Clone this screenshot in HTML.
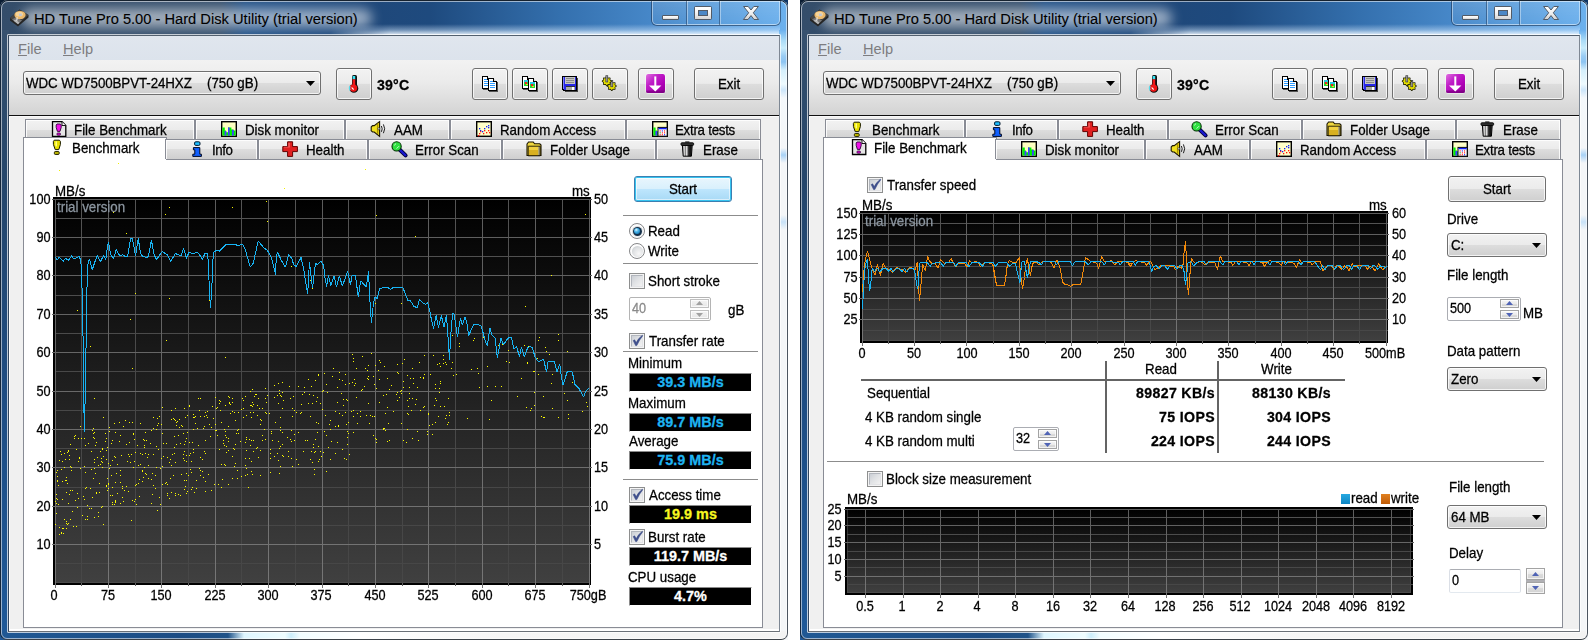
<!DOCTYPE html><html><head><meta charset="utf-8"><title>HD Tune Pro</title><style>
html,body{margin:0;padding:0;background:#fff;}
body{width:1588px;height:640px;overflow:hidden;position:relative;font-family:"Liberation Sans",sans-serif;font-size:13.33px;}
.win{position:absolute;top:0;width:788px;height:640px;overflow:hidden;}
.win *{position:absolute;box-sizing:border-box;}
.t{white-space:nowrap;-webkit-text-stroke:0.28px currentColor;}
.win .t *{position:static;}
svg{overflow:visible;}
.btn{border:1px solid #707070;border-radius:3px;background:linear-gradient(#f2f2f2 0%,#ebebeb 48%,#dddddd 50%,#cfcfcf 100%);box-shadow:inset 0 0 0 1px rgba(255,255,255,.75);}
.tab{border:1px solid #898c95;border-bottom:none;background:linear-gradient(#f2f2f2 0%,#ebebeb 48%,#dddddd 50%,#cfcfcf 100%);box-shadow:inset 1px 1px 0 0 rgba(255,255,255,.85), inset -1px 0 0 0 rgba(255,255,255,.85);}
.blk{background:#000;color:#fff;text-align:center;font-weight:bold;font-size:14.6px;}

.tab .tc{position:static;display:flex;justify-content:center;align-items:center;width:100%;height:100%;white-space:nowrap;}
.tab .tc *{position:static;}
.tab .tc svg{margin-right:7.5px;flex:none;}
.tab .tc span{line-height:16px;font-size:14.5px;display:inline-block;transform:scaleX(.919);transform-origin:0 50%;}
.tab.sel{background:#fff;box-shadow:none;}
</style></head><body><div class="win" style="left:0px;"><div style="left:0;top:0;width:9px;height:9px;background:#0b1d33;"></div><div style="left:779px;top:0;width:9px;height:9px;background:#0d3566;"></div><div style="left:0;top:631px;width:9px;height:9px;background:#0a2f5c;"></div><div style="left:779px;top:631px;width:9px;height:9px;background:#c4c4c4;"></div><div style="left:0;top:0;width:788px;height:640px;border-radius:8px 8px 7px 7px;background:#f4f6f8;"></div><div style="left:0;top:0;width:788px;height:36px;border-radius:8px 8px 0 0;background:linear-gradient(to right,#344d6a 0px,#38526f 220px,#27558a 245px,#1f487a 370px,#1e4a7e 430px,#3470ae 560px,#4687c8 650px,#5a9edd 720px,#6cb1ee 788px);"></div><div style="left:330px;top:24px;width:450px;height:11px;background:linear-gradient(to bottom,rgba(255,255,255,0) 0,rgba(215,235,255,.45) 55%,rgba(240,248,255,.95) 100%);-webkit-mask-image:linear-gradient(to right,transparent,#000 60px);mask-image:linear-gradient(to right,transparent,#000 60px);"></div><div style="left:0;top:30px;width:9px;height:610px;background:linear-gradient(to bottom,#38526f 0,#314d6c 40px,#25466b 150px,#1e4d84 380px,#1f5998 600px);"></div><div style="left:779px;top:30px;width:9px;height:610px;background:linear-gradient(to bottom,#6cb1ee 0,#a8daf6 10px,#c8ecfb 18px,#9accf4 26px,#8cc4f2 32px,#d4effc 40px,#eefafe 54px,#cde6fa 60px,#f4f8fb 68px,#f4f6f8 118px,#a8d2f6 125px,#f4f6f8 133px,#f4f6f8 185px,#c8e2f8 192px,#f4f6f8 200px,#f4f6f8 610px);"></div><div style="left:0;top:631px;width:788px;height:9px;border-radius:0 0 7px 7px;background:linear-gradient(to right,#1f5894 0,#1c4c84 180px,#1f5288 228px,#dff6ff 244px,#effdff 285px,#cdeefb 291px,#f2fdff 300px,#ffffff 360px,#f6f6f6 500px,#f3f3f3 788px);"></div><div style="left:22px;top:9px;width:350px;height:18px;border-radius:9px;background:rgba(255,255,255,.55);filter:blur(6px);"></div><div style="left:0;top:0;width:788px;height:640px;border-radius:8px 8px 7px 7px;border:1px solid;border-color:#16222f #4c5560 #3b4148 #14263b;"></div><div style="left:1px;top:1px;width:786px;height:638px;border-radius:7px 7px 6px 6px;border:1px solid rgba(255,255,255,.55);"></div><div style="left:7px;top:34px;width:774px;height:599px;border:1px solid rgba(255,255,255,.7);border-radius:1px;"></div><div style="left:8px;top:35px;width:772px;height:597px;border:1px solid;border-color:#53606e #7e8894 #6a7077 #34465c;background:#f0f0f0;"></div><div style="left:9px;top:117px;width:1px;height:514px;background:#fff;"></div><div style="left:9px;top:629px;width:770px;height:2px;background:#fff;"></div><svg style="left:9px;top:7px" width="22" height="21" viewBox="0 0 22 21"><polygon points="1,11 10.5,2.5 19.5,8 19.5,10.5 9,19.5 1,13.5" fill="#262626"/><polygon points="1,11 10.5,2.5 19.5,8 9,17" fill="#444"/><polygon points="3,12.4 9,17 13,13.4 7.4,10" fill="#8a8a8a" opacity=".75"/><polygon points="4.6,13.8 9,17.2 10.6,15.8 6.2,12.6" fill="#c8c8c8" opacity=".8"/><ellipse cx="11" cy="8" rx="5.6" ry="4.1" fill="#eab86c"/><ellipse cx="10.4" cy="7.2" rx="3.6" ry="2.4" fill="#f6d59a"/><rect x="10" y="6.6" width="2.8" height="2.4" fill="#c2c6d2"/><polygon points="7.6,10.4 8.6,10 8.4,13.6 7.2,14" fill="#f0f0f0"/></svg><div class="t" style="left:34px;top:9.91px;font-size:14.68px;line-height:18px;color:#000;-webkit-text-stroke:0.1px #000;">HD Tune Pro 5.00 - Hard Disk Utility (trial version)</div><div style="left:651px;top:0px;width:130px;height:26px;border:1px solid rgba(20,40,70,.55);border-top:none;border-radius:0 0 6px 6px;"></div><div style="left:652px;top:1px;width:128px;height:24px;border:1px solid rgba(255,255,255,.45);border-top:none;border-radius:0 0 5px 5px;background:linear-gradient(rgba(255,255,255,.12),rgba(255,255,255,.02));"></div><div style="left:686px;top:1px;width:1px;height:24px;background:rgba(20,40,70,.45);"></div><div style="left:687px;top:1px;width:1px;height:23px;background:rgba(255,255,255,.4);"></div><div style="left:719px;top:1px;width:1px;height:24px;background:rgba(20,40,70,.45);"></div><div style="left:720px;top:1px;width:1px;height:23px;background:rgba(255,255,255,.4);"></div><div style="left:662px;top:15px;width:17px;height:5px;background:linear-gradient(#ffffff 0,#f4f4f4 45%,#d6d6d6 100%);border:1px solid #535b66;border-radius:1px;"></div><div style="left:694px;top:6px;width:18px;height:14px;background:linear-gradient(#ffffff 0,#f4f4f4 45%,#d6d6d6 100%);border:1px solid #535b66;border-radius:1.5px;"></div><div style="left:698px;top:10px;width:10px;height:6px;background:#4c88c6;border:1px solid #535b66;"></div><svg style="left:742px;top:5px" width="18" height="16" viewBox="0 0 18 16"><defs><linearGradient id="xg" x1="0" y1="0" x2="0" y2="1"><stop offset="0" stop-color="#fff"/><stop offset=".5" stop-color="#f0f0f0"/><stop offset="1" stop-color="#d0d0d0"/></linearGradient></defs><path d="M1.6,1.5 L6.2,1.5 L9,5 L11.8,1.5 L16.4,1.5 L11.3,7.8 L16.6,14.5 L12,14.5 L9,10.6 L6,14.5 L1.4,14.5 L6.7,7.8 Z" fill="url(#xg)" stroke="#535b66" stroke-width="1" stroke-linejoin="round"/></svg><div style="left:9px;top:36px;width:770px;height:24px;background:linear-gradient(#e0e6ee,#dce3ec);"></div><div class="t" style="left:18px;top:39.94px;font-size:14.6px;line-height:18px;color:#7d7d80;-webkit-text-stroke:0;"><u>F</u>ile</div><div class="t" style="left:63px;top:39.94px;font-size:14.6px;line-height:18px;color:#7d7d80;-webkit-text-stroke:0;"><u>H</u>elp</div><div style="left:9px;top:60px;width:770px;height:55px;background:linear-gradient(#f2f2f2 0,#ebebeb 40%,#d3d3d3 100%);"></div><div style="left:9px;top:115px;width:770px;height:1px;background:#101010;"></div><div style="left:9px;top:116px;width:770px;height:1px;background:#fafafa;"></div><div class="btn" style="left:23px;top:71px;width:298px;height:24px;"></div><div class="t" style="left:26.3px;top:73.98px;font-size:14.5px;line-height:18px;color:#000;transform:scaleX(0.919);transform-origin:0 0;letter-spacing:-0.09px;">WDC WD7500BPVT-24HXZ</div><div class="t" style="left:207.3px;top:73.98px;font-size:14.5px;line-height:18px;color:#000;transform:scaleX(0.919);transform-origin:0 0;">(750 gB)</div><svg style="left:306px;top:81px" width="9" height="5" viewBox="0 0 9 5"><polygon points="0,0 9,0 4.5,5" fill="#000"/></svg><div class="btn" style="left:336px;top:68px;width:36px;height:32px;"></div><svg style="left:347px;top:74px" width="14" height="22" viewBox="0 0 14 22"><rect x="5" y="1" width="5" height="14" rx="1.6" fill="#101010"/><rect x="5.6" y="2" width="2.6" height="3.4" fill="#38e4f4"/><rect x="5.6" y="5.2" width="2.6" height="9" fill="#f01818"/><circle cx="6.9" cy="14.4" r="4.4" fill="#101010"/><circle cx="6.5" cy="14.1" r="3.7" fill="#ee1414"/><path d="M3,12 q-1.2,2.2 0,4.4" stroke="#58dcec" stroke-width="1.5" fill="none"/><rect x="5.6" y="10" width="2.6" height="3" fill="#f01818"/><path d="M4.8,13.4 q0.4,1.6 2,2" stroke="#fff" stroke-width="1.1" fill="none"/></svg><div class="t" style="left:377px;top:75.98px;font-size:14.5px;line-height:18px;color:#000;font-weight:bold;transform:scaleX(0.975);transform-origin:0 0;letter-spacing:0.2px;">39°C</div><div class="btn" style="left:472px;top:68px;width:36px;height:32px;"></div><svg style="left:481px;top:75px" width="18" height="18" viewBox="0 0 18 18" shape-rendering="crispEdges"><path d="M1.5,1.5 h5 l3,3 v9 h-8 z" fill="#fff" stroke="#000" stroke-width="1"/><path d="M6.5,1.5 v3 h3" fill="#d8d8d8" stroke="#000" stroke-width="1"/><rect x="10" y="5" width="1" height="10" fill="#555"/><rect x="2" y="14" width="9" height="1" fill="#555"/><rect x="3" y="4" width="3" height="1" fill="#2e9bff"/><rect x="3" y="6" width="5" height="1" fill="#2e9bff"/><rect x="3" y="8" width="5" height="1" fill="#2e9bff"/><rect x="3" y="10" width="5" height="1" fill="#2e9bff"/><path d="M7.5,3.5 h5 l3,3 v9 h-8 z" fill="#fff" stroke="#000" stroke-width="1"/><path d="M12.5,3.5 v3 h3" fill="#d8d8d8" stroke="#000" stroke-width="1"/><rect x="16" y="7" width="1" height="10" fill="#555"/><rect x="8" y="16" width="9" height="1" fill="#555"/><rect x="9" y="6" width="3" height="1" fill="#2e9bff"/><rect x="9" y="8" width="5" height="1" fill="#2e9bff"/><rect x="9" y="10" width="5" height="1" fill="#2e9bff"/><rect x="9" y="12" width="5" height="1" fill="#2e9bff"/></svg><div class="btn" style="left:512px;top:68px;width:36px;height:32px;"></div><svg style="left:521px;top:75px" width="18" height="18" viewBox="0 0 18 18" shape-rendering="crispEdges"><path d="M1.5,1.5 h5 l3,3 v9 h-8 z" fill="#fff" stroke="#000" stroke-width="1"/><path d="M6.5,1.5 v3 h3" fill="#d8d8d8" stroke="#000" stroke-width="1"/><rect x="10" y="5" width="1" height="10" fill="#555"/><rect x="2" y="14" width="9" height="1" fill="#555"/><rect x="3" y="5" width="5" height="2" fill="#28c8e8"/><rect x="3" y="7" width="5" height="4" fill="#20d838"/><rect x="4" y="7" width="2" height="2" fill="#f02020"/><rect x="5" y="9" width="2" height="1" fill="#f0e020"/><path d="M7.5,3.5 h5 l3,3 v9 h-8 z" fill="#fff" stroke="#000" stroke-width="1"/><path d="M12.5,3.5 v3 h3" fill="#d8d8d8" stroke="#000" stroke-width="1"/><rect x="16" y="7" width="1" height="10" fill="#555"/><rect x="8" y="16" width="9" height="1" fill="#555"/><rect x="9" y="7" width="5" height="2" fill="#28c8e8"/><rect x="9" y="9" width="5" height="4" fill="#20d838"/><rect x="10" y="9" width="2" height="2" fill="#f02020"/><rect x="11" y="11" width="2" height="1" fill="#f0e020"/></svg><div class="btn" style="left:552px;top:68px;width:36px;height:32px;"></div><svg style="left:561px;top:75px" width="18" height="18" viewBox="0 0 18 18" shape-rendering="crispEdges"><path d="M1.5,1.5 h14 v14 h-12.5 l-1.5,-1.5 z" fill="#2626e6" stroke="#000" stroke-width="1"/><rect x="2" y="2" width="1" height="12" fill="#7a7aff"/><rect x="4" y="2" width="10" height="7" fill="#c4c4c4"/><rect x="5" y="3" width="8" height="1" fill="#8a8a8a"/><rect x="5" y="5" width="8" height="1" fill="#8a8a8a"/><rect x="5" y="7" width="8" height="1" fill="#8a8a8a"/><rect x="5" y="11" width="9" height="4" fill="#a8a8a8"/><rect x="5" y="11" width="9" height="1" fill="#333"/><rect x="11" y="12" width="2" height="3" fill="#fff"/><rect x="16" y="3" width="1" height="14" fill="#444"/><rect x="4" y="16" width="13" height="1" fill="#444"/></svg><div class="btn" style="left:592px;top:68px;width:36px;height:32px;"></div><svg style="left:601px;top:75px" width="18" height="18" viewBox="0 0 18 18"><polygon points="15.10,11.00 13.50,12.12 13.84,14.04 11.92,13.70 10.80,15.30 9.68,13.70 7.76,14.04 8.10,12.12 6.50,11.00 8.10,9.88 7.76,7.96 9.68,8.30 10.80,6.70 11.92,8.30 13.84,7.96 13.50,9.88" fill="#e6e000" stroke="#1a1a00" stroke-width="1.5" stroke-linejoin="round"/><polygon points="15.10,11.00 13.50,12.12 13.84,14.04 11.92,13.70 10.80,15.30 9.68,13.70 7.76,14.04 8.10,12.12 6.50,11.00 8.10,9.88 7.76,7.96 9.68,8.30 10.80,6.70 11.92,8.30 13.84,7.96 13.50,9.88" fill="#e6e000"/><rect x="9.8" y="5.5" width="2" height="6.3" fill="#9a9a9a" stroke="#333" stroke-width=".6"/><polygon points="10.10,6.20 8.50,7.32 8.84,9.24 6.92,8.90 5.80,10.50 4.68,8.90 2.76,9.24 3.10,7.32 1.50,6.20 3.10,5.08 2.76,3.16 4.68,3.50 5.80,1.90 6.92,3.50 8.84,3.16 8.50,5.08" fill="#e6e000" stroke="#1a1a00" stroke-width="1.5" stroke-linejoin="round"/><polygon points="10.10,6.20 8.50,7.32 8.84,9.24 6.92,8.90 5.80,10.50 4.68,8.90 2.76,9.24 3.10,7.32 1.50,6.20 3.10,5.08 2.76,3.16 4.68,3.50 5.80,1.90 6.92,3.50 8.84,3.16 8.50,5.08" fill="#e6e000"/><rect x="4.8" y="0.7000000000000004" width="2" height="6.3" fill="#9a9a9a" stroke="#333" stroke-width=".6"/></svg><div class="btn" style="left:638px;top:68px;width:36px;height:32px;"></div><svg style="left:647px;top:75px;margin-left:-2px;margin-top:-2px" width="22" height="22" viewBox="0 0 22 22"><defs><linearGradient id="pg" x1="0" y1="0" x2="1" y2="1"><stop offset="0" stop-color="#e070e0"/><stop offset="0.35" stop-color="#c020c8"/><stop offset="0.7" stop-color="#b000b8"/><stop offset="1" stop-color="#8a0090"/></linearGradient></defs><rect x="0.5" y="0.5" width="20" height="20" rx="2.5" fill="#fff" opacity=".85"/><rect x="1" y="1" width="19" height="19" rx="2.2" fill="url(#pg)"/><rect x="1" y="17.5" width="19" height="2.5" rx="1.5" fill="#78007e" opacity=".7"/><rect x="9.3" y="3.4" width="2" height="10" fill="#fff"/><polygon points="4,12.4 16.4,12.4 10.3,18.4" fill="#fff"/></svg><div class="btn" style="left:694px;top:68px;width:70px;height:32px;"></div><div class="t" style="left:694px;top:74.98px;font-size:14.5px;line-height:18px;color:#000;width:70px;text-align:center;transform:scaleX(0.919);transform-origin:50% 0;">Exit</div><div style="left:23px;top:159px;width:740px;height:469px;background:#fff;border:1px solid #898c95;"></div><div class="tab" style="left:25px;top:119px;width:170px;height:21px;"></div><svg style="left:50.7px;top:121px" width="16" height="16" viewBox="0 0 16 16"><path d="M1.5,0.7 h9.5 l3.8,3.8 v11 h-13.3 z" fill="#e6e6e6" stroke="#000" stroke-width="1.3"/><path d="M11,0.7 v3.8 h3.8" fill="#fff" stroke="#000" stroke-width="0.9"/><path d="M6,3 h3.4 l0.8,1 v2.4 l-1.2,4 h-2.6 l-1.2,-4 v-2.4 z" fill="#f010e8" stroke="#30003a" stroke-width="0.9"/><rect x="6" y="12" width="3.4" height="2.2" rx="0.7" fill="#e010d8" stroke="#30003a" stroke-width="0.8"/></svg><div class="t" style="left:74.2px;top:120.68px;font-size:14.5px;line-height:18px;color:#000;transform:scaleX(0.919);transform-origin:0 0;">File Benchmark</div><div class="tab" style="left:195px;top:119px;width:150px;height:21px;"></div><svg style="left:221.0px;top:121px" width="16" height="16" viewBox="0 0 16 16"><rect x="0.7" y="0.7" width="14.6" height="14.6" fill="#ffffc0" stroke="#000" stroke-width="1.4"/><path d="M1.4,14.6 v-8 h2.4 v3 h1.2 v1.6 h2 v-4.6 h3.4 v1.8 h2 v1.2 h2.2 v5 z" fill="#00f000"/><rect x="3.6" y="10" width="1.8" height="4.6" fill="#4040ff"/><rect x="7" y="6.4" width="1.6" height="8.2" fill="#4040ff"/><rect x="11" y="8.8" width="1.8" height="5.8" fill="#4040ff"/></svg><div class="t" style="left:244.5px;top:120.68px;font-size:14.5px;line-height:18px;color:#000;transform:scaleX(0.919);transform-origin:0 0;">Disk monitor</div><div class="tab" style="left:345px;top:119px;width:105px;height:21px;"></div><svg style="left:370.4px;top:121px" width="17" height="16" viewBox="0 0 17 16"><path d="M1.2,6 l1.4,-1.4 h1.6 l5.4,-4 v14.8 l-5.4,-4.4 h-1.6 l-1.4,-1.2 z" fill="#f0e020" stroke="#1a1400" stroke-width="1.1"/><path d="M7.6,2.6 v10.4" stroke="#a89000" stroke-width="1.4"/><circle cx="8.8" cy="7.8" r="1" fill="#fff" stroke="#222" stroke-width=".6"/><path d="M11.4,5 q1.6,2.8 0,5.8 M13.4,3.4 q2.6,4.4 0,8.8" fill="none" stroke="#222" stroke-width="1"/></svg><div class="t" style="left:393.9px;top:120.68px;font-size:14.5px;line-height:18px;color:#000;transform:scaleX(0.919);transform-origin:0 0;">AAM</div><div class="tab" style="left:450px;top:119px;width:176px;height:21px;"></div><svg style="left:476.1px;top:121px" width="16" height="16" viewBox="0 0 16 16"><rect x="0.7" y="0.7" width="14.6" height="14.6" fill="#ffffc8" stroke="#000" stroke-width="1.4"/><rect x="3" y="7" width="1.3" height="1.3" fill="#1020ff"/><rect x="4" y="9" width="1.3" height="1.3" fill="#1020ff"/><rect x="6" y="10" width="1.3" height="1.3" fill="#1020ff"/><rect x="8" y="7" width="1.3" height="1.3" fill="#1020ff"/><rect x="10" y="5" width="1.3" height="1.3" fill="#1020ff"/><rect x="12" y="4" width="1.3" height="1.3" fill="#1020ff"/><rect x="12" y="6" width="1.3" height="1.3" fill="#1020ff"/><rect x="2" y="14" width="1.3" height="1.3" fill="#ff1010"/><rect x="3" y="12" width="1.3" height="1.3" fill="#ff1010"/><rect x="4" y="10" width="1.3" height="1.3" fill="#ff1010"/><rect x="7" y="12" width="1.3" height="1.3" fill="#ff1010"/><rect x="8" y="9" width="1.3" height="1.3" fill="#ff1010"/><rect x="10" y="11" width="1.3" height="1.3" fill="#ff1010"/><rect x="12" y="9" width="1.3" height="1.3" fill="#ff1010"/><rect x="13" y="11" width="1.3" height="1.3" fill="#ff1010"/></svg><div class="t" style="left:499.6px;top:120.68px;font-size:14.5px;line-height:18px;color:#000;transform:scaleX(0.919);transform-origin:0 0;">Random Access</div><div class="tab" style="left:626px;top:119px;width:135px;height:21px;"></div><svg style="left:651.5px;top:121px" width="16" height="16" viewBox="0 0 16 16"><rect x="0.7" y="0.7" width="14.6" height="14.6" fill="#ffffc8" stroke="#000" stroke-width="1.4"/><path d="M1.4,14.6 v-8 h2.2 v3 h1.4 v1 h1 v4 z" fill="#00f000"/><rect x="3.4" y="10" width="2" height="4.6" fill="#4040ff"/><rect x="6" y="6.4" width="9.2" height="8.8" fill="#fff" stroke="#000" stroke-width="1"/><rect x="6.5" y="6.9" width="8.2" height="1.4" fill="#1020ff"/><rect x="7.6" y="9.4" width="1.1" height="1.1" fill="#ff1010"/><rect x="9.8" y="9.4" width="1.1" height="1.1" fill="#1020ff"/><rect x="12.0" y="9.4" width="1.1" height="1.1" fill="#ff1010"/><rect x="7.6" y="11.3" width="1.1" height="1.1" fill="#00c000"/><rect x="9.8" y="11.3" width="1.1" height="1.1" fill="#ff1010"/><rect x="12.0" y="11.3" width="1.1" height="1.1" fill="#ff1010"/><rect x="7.6" y="13.2" width="1.1" height="1.1" fill="#ff1010"/><rect x="9.8" y="13.2" width="1.1" height="1.1" fill="#ff1010"/><rect x="12.0" y="13.2" width="1.1" height="1.1" fill="#1020ff"/></svg><div class="t" style="left:675.0px;top:120.68px;font-size:14.5px;line-height:18px;color:#000;transform:scaleX(0.919);transform-origin:0 0;letter-spacing:-0.29px;">Extra tests</div><div class="tab sel" style="left:23px;top:137px;width:144px;height:23px;"></div><svg style="left:48.8px;top:139px" width="16" height="16" viewBox="0 0 16 16"><path d="M5.2,1.2 h5.2 l1,1.2 v3 l-1.6,5.2 h-3.6 l-1.8,-5.2 v-3 z" fill="#e8e000" stroke="#1a1a00" stroke-width="1"/><rect x="6.4" y="2.4" width="1.6" height="5" fill="#ffff80"/><rect x="5.4" y="12.6" width="4.8" height="2.8" rx="0.8" fill="#c8c000" stroke="#1a1a00" stroke-width="1"/></svg><div class="t" style="left:72.3px;top:139.08px;font-size:14.5px;line-height:18px;color:#000;transform:scaleX(0.919);transform-origin:0 0;">Benchmark</div><div class="tab" style="left:165px;top:139px;width:93px;height:20px;"></div><svg style="left:188.9px;top:141.3px" width="16" height="16" viewBox="0 0 16 16"><rect x="5.6" y="0.8" width="5.4" height="3.6" rx="1.2" fill="#20c0ff" stroke="#001830" stroke-width="1"/><path d="M4.4,6.6 h6.4 v6.6 h1.6 v2.2 h-8.6 v-2.2 h2 v-4.4 h-1.4 z" fill="#1060ff" stroke="#000820" stroke-width="1"/></svg><div class="t" style="left:212.4px;top:140.68px;font-size:14.5px;line-height:18px;color:#000;transform:scaleX(0.919);transform-origin:0 0;letter-spacing:-0.5px;">Info</div><div class="tab" style="left:258px;top:139px;width:110px;height:20px;"></div><svg style="left:282.0px;top:141.3px" width="16" height="16" viewBox="0 0 16 16"><path d="M5.6,0.8 h5 v4.8 h4.8 v5 h-4.8 v4.8 h-5 v-4.8 h-4.8 v-5 h4.8 z" fill="#e02020" stroke="#600000" stroke-width="1"/><path d="M6.4,1.8 h1.4 v4.8 h-6 v-0.9 h4.6 z" fill="#ff7070" opacity=".8"/></svg><div class="t" style="left:305.5px;top:140.68px;font-size:14.5px;line-height:18px;color:#000;transform:scaleX(0.919);transform-origin:0 0;">Health</div><div class="tab" style="left:368px;top:139px;width:134px;height:20px;"></div><svg style="left:391.2px;top:141.3px" width="17" height="16" viewBox="0 0 17 16"><path d="M8,8 L14.6,14.4" stroke="#000040" stroke-width="4" stroke-linecap="round"/><path d="M8.4,8.4 L14.4,14.2" stroke="#1818d0" stroke-width="2.2" stroke-linecap="round"/><circle cx="5.6" cy="5.4" r="4.6" fill="#30e040" stroke="#003000" stroke-width="1.1"/><path d="M3.2,4.4 L5,2.6 M5.6,7.6 L8,5.2" stroke="#c8ffd0" stroke-width="1"/></svg><div class="t" style="left:414.7px;top:140.68px;font-size:14.5px;line-height:18px;color:#000;transform:scaleX(0.919);transform-origin:0 0;">Error Scan</div><div class="tab" style="left:502px;top:139px;width:154px;height:20px;"></div><svg style="left:526.2px;top:141.3px" width="16" height="16" viewBox="0 0 16 16"><path d="M1,3 l1.6,-2 h4.6 l1.4,1.8 h5.2 l1.2,1.2 v10.5 h-14 z" fill="#f0d840" stroke="#1a1400" stroke-width="1.1"/><rect x="2.6" y="5.6" width="9.6" height="9" fill="#d8b020"/><rect x="2.6" y="5.6" width="9.6" height="3.4" fill="#f0d040"/><rect x="12.4" y="5.2" width="1.4" height="9.4" fill="#909090"/><path d="M2.2,5.2 h12 v9.6 h-12 z" fill="none" stroke="#1a1400" stroke-width="0.9"/></svg><div class="t" style="left:549.8px;top:140.68px;font-size:14.5px;line-height:18px;color:#000;transform:scaleX(0.919);transform-origin:0 0;">Folder Usage</div><div class="tab" style="left:656px;top:139px;width:105px;height:20px;"></div><svg style="left:679.8px;top:141.3px" width="14" height="16" viewBox="0 0 14 16"><defs><linearGradient id="tg" x1="0" x2="1" y1="0" y2="0"><stop offset="0" stop-color="#1a1a1a"/><stop offset=".16" stop-color="#fff"/><stop offset=".3" stop-color="#777"/><stop offset=".44" stop-color="#f0f0f0"/><stop offset=".6" stop-color="#3a3a3a"/><stop offset=".8" stop-color="#0c0c0c"/><stop offset="1" stop-color="#555"/></linearGradient></defs><path d="M2.4,4.4 h9.8 l-0.8,10.8 h-8.2 z" fill="url(#tg)" stroke="#000" stroke-width="1"/><rect x="1" y="1.8" width="12.6" height="2.6" rx="0.8" fill="#333" stroke="#000" stroke-width="0.9"/><rect x="5.2" y="0.4" width="4.2" height="1.6" fill="#222"/></svg><div class="t" style="left:703.3px;top:140.68px;font-size:14.5px;line-height:18px;color:#000;transform:scaleX(0.919);transform-origin:0 0;">Erase</div><svg style="left:49px;top:197px" width="546" height="394" viewBox="49 197 546 394" shape-rendering="crispEdges"><defs><linearGradient id="g1bg" gradientUnits="userSpaceOnUse" x1="0" y1="199" x2="0" y2="583"><stop offset="0" stop-color="#000"/><stop offset="1" stop-color="#404040"/></linearGradient><linearGradient id="g1M" gradientUnits="userSpaceOnUse" x1="0" y1="199" x2="0" y2="583"><stop offset="0" stop-color="#5c5c5c"/><stop offset="1" stop-color="#767676"/></linearGradient><linearGradient id="g1m" gradientUnits="userSpaceOnUse" x1="0" y1="199" x2="0" y2="583"><stop offset="0" stop-color="#545454"/><stop offset=".45" stop-color="#484848"/><stop offset="1" stop-color="#474747"/></linearGradient><linearGradient id="g1d" gradientUnits="userSpaceOnUse" x1="0" y1="199" x2="0" y2="583"><stop offset="0" stop-color="#2c2c2c"/><stop offset="1" stop-color="#4c4c4c"/></linearGradient></defs><rect x="53" y="197" width="538" height="388" fill="#000"/><rect x="55" y="199" width="535" height="384" fill="url(#g1bg)"/><rect x="55" y="582" width="535" height="1" fill="#4c4c4c"/><rect x="81" y="199" width="1" height="384" fill="url(#g1m)"/><rect x="81" y="583" width="1" height="3" fill="#5e5e5e"/><rect x="135" y="199" width="1" height="384" fill="url(#g1m)"/><rect x="135" y="583" width="1" height="3" fill="#5e5e5e"/><rect x="188" y="199" width="1" height="384" fill="url(#g1m)"/><rect x="188" y="583" width="1" height="3" fill="#5e5e5e"/><rect x="241" y="199" width="1" height="384" fill="url(#g1m)"/><rect x="241" y="583" width="1" height="3" fill="#5e5e5e"/><rect x="295" y="199" width="1" height="384" fill="url(#g1m)"/><rect x="295" y="583" width="1" height="3" fill="#5e5e5e"/><rect x="348" y="199" width="1" height="384" fill="url(#g1m)"/><rect x="348" y="583" width="1" height="3" fill="#5e5e5e"/><rect x="402" y="199" width="1" height="384" fill="url(#g1m)"/><rect x="402" y="583" width="1" height="3" fill="#5e5e5e"/><rect x="455" y="199" width="1" height="384" fill="url(#g1m)"/><rect x="455" y="583" width="1" height="3" fill="#5e5e5e"/><rect x="508" y="199" width="1" height="384" fill="url(#g1m)"/><rect x="508" y="583" width="1" height="3" fill="#5e5e5e"/><rect x="562" y="199" width="1" height="384" fill="url(#g1m)"/><rect x="562" y="583" width="1" height="3" fill="#5e5e5e"/><rect x="55" y="218" width="536" height="1" fill="#535353"/><rect x="55" y="256" width="536" height="1" fill="#505050"/><rect x="55" y="295" width="536" height="1" fill="#4d4d4d"/><rect x="55" y="333" width="536" height="1" fill="#4b4b4b"/><rect x="55" y="371" width="536" height="1" fill="#484848"/><rect x="55" y="410" width="536" height="1" fill="#484848"/><rect x="55" y="448" width="536" height="1" fill="#484848"/><rect x="55" y="487" width="536" height="1" fill="#474747"/><rect x="55" y="525" width="536" height="1" fill="#474747"/><rect x="55" y="563" width="536" height="1" fill="#474747"/><rect x="55" y="199" width="1" height="384" fill="url(#g1M)"/><rect x="55" y="583" width="1" height="5" fill="#727272"/><rect x="108" y="199" width="1" height="384" fill="url(#g1M)"/><rect x="108" y="583" width="1" height="5" fill="#727272"/><rect x="161" y="199" width="1" height="384" fill="url(#g1M)"/><rect x="161" y="583" width="1" height="5" fill="#727272"/><rect x="215" y="199" width="1" height="384" fill="url(#g1M)"/><rect x="215" y="583" width="1" height="5" fill="#727272"/><rect x="268" y="199" width="1" height="384" fill="url(#g1M)"/><rect x="268" y="583" width="1" height="5" fill="#727272"/><rect x="322" y="199" width="1" height="384" fill="url(#g1M)"/><rect x="322" y="583" width="1" height="5" fill="#727272"/><rect x="375" y="199" width="1" height="384" fill="url(#g1M)"/><rect x="375" y="583" width="1" height="5" fill="#727272"/><rect x="428" y="199" width="1" height="384" fill="url(#g1M)"/><rect x="428" y="583" width="1" height="5" fill="#727272"/><rect x="482" y="199" width="1" height="384" fill="url(#g1M)"/><rect x="482" y="583" width="1" height="5" fill="#727272"/><rect x="535" y="199" width="1" height="384" fill="url(#g1M)"/><rect x="535" y="583" width="1" height="5" fill="#727272"/><rect x="589" y="199" width="1" height="384" fill="url(#g1M)"/><rect x="589" y="583" width="1" height="5" fill="#727272"/><rect x="52" y="199" width="540" height="1" fill="#5c5c5c"/><rect x="52" y="237" width="540" height="1" fill="#5f5f5f"/><rect x="52" y="275" width="540" height="1" fill="#616161"/><rect x="52" y="314" width="540" height="1" fill="#646464"/><rect x="52" y="352" width="540" height="1" fill="#666666"/><rect x="52" y="391" width="540" height="1" fill="#696969"/><rect x="52" y="429" width="540" height="1" fill="#6c6c6c"/><rect x="52" y="467" width="540" height="1" fill="#6e6e6e"/><rect x="52" y="506" width="540" height="1" fill="#717171"/><rect x="52" y="544" width="540" height="1" fill="#737373"/><path d="M170,459h1v1h-1zM174,453h1v1h-1zM95,473h1v1h-1zM279,390h1v1h-1zM72,511h1v1h-1zM61,533h1v1h-1zM233,448h1v1h-1zM57,499h1v1h-1zM96,442h1v1h-1zM174,447h1v1h-1zM191,461h1v1h-1zM236,433h1v1h-1zM349,454h1v1h-1zM251,417h1v1h-1zM123,426h1v1h-1zM155,488h1v1h-1zM335,453h1v1h-1zM101,507h1v1h-1zM343,399h1v1h-1zM225,465h1v1h-1zM71,467h1v1h-1zM267,395h1v1h-1zM74,438h1v1h-1zM93,478h1v1h-1zM96,492h1v1h-1zM230,404h1v1h-1zM102,449h1v1h-1zM282,408h1v1h-1zM101,461h1v1h-1zM229,403h1v1h-1zM102,448h1v1h-1zM134,439h1v1h-1zM72,490h1v1h-1zM216,430h1v1h-1zM335,411h1v1h-1zM304,392h1v1h-1zM318,446h1v1h-1zM96,493h1v1h-1zM98,512h1v1h-1zM217,435h1v1h-1zM61,532h1v1h-1zM250,412h1v1h-1zM215,424h1v1h-1zM255,394h1v1h-1zM203,477h1v1h-1zM120,503h1v1h-1zM57,476h1v1h-1zM65,459h1v1h-1zM207,411h1v1h-1zM312,462h1v1h-1zM245,442h1v1h-1zM60,451h1v1h-1zM248,487h1v1h-1zM228,438h1v1h-1zM131,520h1v1h-1zM199,468h1v1h-1zM260,450h1v1h-1zM320,403h1v1h-1zM315,451h1v1h-1zM278,460h1v1h-1zM224,429h1v1h-1zM219,403h1v1h-1zM347,444h1v1h-1zM151,479h1v1h-1zM167,493h1v1h-1zM265,388h1v1h-1zM179,427h1v1h-1zM184,460h1v1h-1zM114,423h1v1h-1zM241,409h1v1h-1zM317,432h1v1h-1zM312,403h1v1h-1zM98,465h1v1h-1zM320,451h1v1h-1zM211,427h1v1h-1zM184,480h1v1h-1zM252,474h1v1h-1zM91,469h1v1h-1zM102,462h1v1h-1zM183,433h1v1h-1zM343,405h1v1h-1zM59,534h1v1h-1zM251,440h1v1h-1zM278,383h1v1h-1zM171,410h1v1h-1zM109,427h1v1h-1zM225,435h1v1h-1zM234,466h1v1h-1zM243,408h1v1h-1zM93,428h1v1h-1zM253,404h1v1h-1zM139,479h1v1h-1zM221,464h1v1h-1zM279,473h1v1h-1zM326,435h1v1h-1zM171,465h1v1h-1zM148,465h1v1h-1zM280,466h1v1h-1zM232,411h1v1h-1zM287,437h1v1h-1zM102,506h1v1h-1zM342,415h1v1h-1zM132,500h1v1h-1zM140,423h1v1h-1zM200,470h1v1h-1zM59,527h1v1h-1zM281,396h1v1h-1zM277,395h1v1h-1zM190,469h1v1h-1zM245,475h1v1h-1zM332,376h1v1h-1zM193,429h1v1h-1zM228,441h1v1h-1zM203,428h1v1h-1zM296,459h1v1h-1zM298,464h1v1h-1zM207,417h1v1h-1zM186,461h1v1h-1zM339,413h1v1h-1zM282,432h1v1h-1zM245,396h1v1h-1zM159,497h1v1h-1zM117,464h1v1h-1zM165,483h1v1h-1zM178,435h1v1h-1zM222,479h1v1h-1zM274,385h1v1h-1zM106,486h1v1h-1zM142,471h1v1h-1zM258,398h1v1h-1zM112,440h1v1h-1zM166,443h1v1h-1zM194,417h1v1h-1zM226,452h1v1h-1zM298,432h1v1h-1zM107,490h1v1h-1zM316,401h1v1h-1zM323,390h1v1h-1zM311,386h1v1h-1zM257,405h1v1h-1zM292,416h1v1h-1zM80,468h1v1h-1zM57,470h1v1h-1zM319,459h1v1h-1zM186,473h1v1h-1zM243,400h1v1h-1zM75,435h1v1h-1zM189,455h1v1h-1zM95,445h1v1h-1zM346,459h1v1h-1zM66,528h1v1h-1zM269,413h1v1h-1zM189,442h1v1h-1zM56,513h1v1h-1zM94,468h1v1h-1zM156,429h1v1h-1zM189,405h1v1h-1zM282,444h1v1h-1zM225,431h1v1h-1zM186,493h1v1h-1zM114,504h1v1h-1zM274,456h1v1h-1zM314,452h1v1h-1zM270,453h1v1h-1zM256,394h1v1h-1zM175,408h1v1h-1zM228,450h1v1h-1zM330,429h1v1h-1zM235,444h1v1h-1zM151,503h1v1h-1zM249,458h1v1h-1zM58,504h1v1h-1zM114,456h1v1h-1zM97,457h1v1h-1zM112,504h1v1h-1zM187,491h1v1h-1zM348,422h1v1h-1zM69,494h1v1h-1zM62,528h1v1h-1zM176,422h1v1h-1zM220,401h1v1h-1zM161,458h1v1h-1zM144,440h1v1h-1zM204,426h1v1h-1zM125,420h1v1h-1zM62,461h1v1h-1zM152,494h1v1h-1zM63,533h1v1h-1zM68,523h1v1h-1zM178,494h1v1h-1zM192,487h1v1h-1zM175,495h1v1h-1zM217,407h1v1h-1zM171,419h1v1h-1zM193,414h1v1h-1zM238,433h1v1h-1zM210,436h1v1h-1zM194,492h1v1h-1zM259,408h1v1h-1zM313,444h1v1h-1zM143,439h1v1h-1zM205,453h1v1h-1zM266,402h1v1h-1zM342,449h1v1h-1zM61,454h1v1h-1zM162,466h1v1h-1zM198,398h1v1h-1zM240,441h1v1h-1zM147,457h1v1h-1zM138,483h1v1h-1zM68,450h1v1h-1zM224,464h1v1h-1zM162,433h1v1h-1zM145,473h1v1h-1zM133,467h1v1h-1zM322,409h1v1h-1zM73,526h1v1h-1zM70,490h1v1h-1zM243,417h1v1h-1zM69,459h1v1h-1zM70,466h1v1h-1zM246,415h1v1h-1zM142,481h1v1h-1zM78,498h1v1h-1zM321,456h1v1h-1zM166,482h1v1h-1zM131,454h1v1h-1zM313,395h1v1h-1zM144,447h1v1h-1zM151,430h1v1h-1zM280,430h1v1h-1zM204,416h1v1h-1zM309,394h1v1h-1zM190,453h1v1h-1zM338,426h1v1h-1zM66,492h1v1h-1zM70,444h1v1h-1zM315,380h1v1h-1zM84,499h1v1h-1zM111,443h1v1h-1zM191,472h1v1h-1zM136,504h1v1h-1zM183,454h1v1h-1zM251,471h1v1h-1zM290,439h1v1h-1zM283,456h1v1h-1zM335,426h1v1h-1zM251,461h1v1h-1zM161,424h1v1h-1zM346,399h1v1h-1zM100,464h1v1h-1zM339,372h1v1h-1zM77,493h1v1h-1zM93,433h1v1h-1zM211,490h1v1h-1zM76,449h1v1h-1zM108,488h1v1h-1zM105,441h1v1h-1zM92,497h1v1h-1zM200,475h1v1h-1zM115,502h1v1h-1zM138,465h1v1h-1zM179,419h1v1h-1zM331,441h1v1h-1zM193,449h1v1h-1zM346,424h1v1h-1zM56,494h1v1h-1zM280,446h1v1h-1zM88,443h1v1h-1zM115,500h1v1h-1zM228,484h1v1h-1zM195,416h1v1h-1zM55,524h1v1h-1zM289,386h1v1h-1zM254,396h1v1h-1zM175,493h1v1h-1zM301,404h1v1h-1zM160,504h1v1h-1zM290,398h1v1h-1zM193,417h1v1h-1zM129,442h1v1h-1zM127,461h1v1h-1zM143,477h1v1h-1zM153,454h1v1h-1zM291,441h1v1h-1zM148,478h1v1h-1zM205,440h1v1h-1zM347,437h1v1h-1zM221,422h1v1h-1zM197,428h1v1h-1zM152,473h1v1h-1zM99,492h1v1h-1zM330,420h1v1h-1zM135,499h1v1h-1zM84,438h1v1h-1zM251,405h1v1h-1zM294,434h1v1h-1zM106,438h1v1h-1zM157,418h1v1h-1zM163,456h1v1h-1zM270,458h1v1h-1zM135,452h1v1h-1zM155,475h1v1h-1zM278,441h1v1h-1zM57,481h1v1h-1zM232,402h1v1h-1zM188,475h1v1h-1zM220,410h1v1h-1zM316,422h1v1h-1zM185,417h1v1h-1zM345,412h1v1h-1zM293,396h1v1h-1zM225,405h1v1h-1zM111,475h1v1h-1zM134,501h1v1h-1zM173,418h1v1h-1zM82,515h1v1h-1zM204,451h1v1h-1zM318,461h1v1h-1zM216,408h1v1h-1zM123,501h1v1h-1zM208,474h1v1h-1zM200,398h1v1h-1zM94,517h1v1h-1zM235,420h1v1h-1zM261,420h1v1h-1zM282,382h1v1h-1zM175,420h1v1h-1zM206,415h1v1h-1zM116,473h1v1h-1zM229,397h1v1h-1zM85,519h1v1h-1zM176,444h1v1h-1zM245,458h1v1h-1zM180,495h1v1h-1zM300,413h1v1h-1zM205,481h1v1h-1zM192,442h1v1h-1zM132,422h1v1h-1zM315,439h1v1h-1zM265,412h1v1h-1zM67,452h1v1h-1zM186,438h1v1h-1zM246,437h1v1h-1zM128,454h1v1h-1zM67,524h1v1h-1zM237,470h1v1h-1zM283,400h1v1h-1zM205,491h1v1h-1zM279,393h1v1h-1zM333,368h1v1h-1zM126,444h1v1h-1zM313,447h1v1h-1zM142,470h1v1h-1zM59,527h1v1h-1zM184,489h1v1h-1zM176,425h1v1h-1zM323,452h1v1h-1zM294,410h1v1h-1zM91,508h1v1h-1zM99,483h1v1h-1zM308,379h1v1h-1zM257,415h1v1h-1zM305,440h1v1h-1zM247,474h1v1h-1zM69,459h1v1h-1zM252,406h1v1h-1zM108,483h1v1h-1zM146,474h1v1h-1zM213,418h1v1h-1zM324,431h1v1h-1zM229,402h1v1h-1zM167,457h1v1h-1zM62,499h1v1h-1zM112,502h1v1h-1zM122,488h1v1h-1zM120,470h1v1h-1zM314,474h1v1h-1zM173,475h1v1h-1zM325,415h1v1h-1zM202,459h1v1h-1zM235,463h1v1h-1zM186,480h1v1h-1zM191,489h1v1h-1zM274,397h1v1h-1zM108,463h1v1h-1zM277,453h1v1h-1zM181,425h1v1h-1zM184,408h1v1h-1zM253,440h1v1h-1zM94,432h1v1h-1zM184,444h1v1h-1zM115,501h1v1h-1zM318,423h1v1h-1zM278,403h1v1h-1zM129,422h1v1h-1zM223,443h1v1h-1zM212,406h1v1h-1zM91,451h1v1h-1zM245,465h1v1h-1zM65,480h1v1h-1zM103,524h1v1h-1zM181,474h1v1h-1zM85,472h1v1h-1zM61,469h1v1h-1zM84,466h1v1h-1zM162,407h1v1h-1zM348,433h1v1h-1zM107,447h1v1h-1zM110,465h1v1h-1zM144,445h1v1h-1zM219,400h1v1h-1zM232,398h1v1h-1zM246,468h1v1h-1zM310,416h1v1h-1zM296,412h1v1h-1zM103,456h1v1h-1zM200,416h1v1h-1zM102,467h1v1h-1zM169,498h1v1h-1zM302,394h1v1h-1zM68,503h1v1h-1zM119,422h1v1h-1zM115,457h1v1h-1zM253,412h1v1h-1zM87,516h1v1h-1zM270,449h1v1h-1zM57,480h1v1h-1zM70,519h1v1h-1zM271,431h1v1h-1zM153,428h1v1h-1zM86,487h1v1h-1zM129,456h1v1h-1zM83,496h1v1h-1zM257,447h1v1h-1zM100,451h1v1h-1zM156,446h1v1h-1zM106,450h1v1h-1zM103,417h1v1h-1zM226,446h1v1h-1zM341,393h1v1h-1zM322,391h1v1h-1zM237,478h1v1h-1zM108,484h1v1h-1zM163,443h1v1h-1zM150,443h1v1h-1zM120,435h1v1h-1zM177,421h1v1h-1zM109,431h1v1h-1zM161,424h1v1h-1zM249,439h1v1h-1zM58,485h1v1h-1zM66,477h1v1h-1zM183,458h1v1h-1zM133,434h1v1h-1zM139,496h1v1h-1zM115,482h1v1h-1zM175,462h1v1h-1zM144,467h1v1h-1zM272,440h1v1h-1zM158,449h1v1h-1zM291,458h1v1h-1zM318,375h1v1h-1zM187,432h1v1h-1zM342,380h1v1h-1zM106,485h1v1h-1zM55,501h1v1h-1zM109,468h1v1h-1zM200,457h1v1h-1zM292,466h1v1h-1zM139,496h1v1h-1zM253,451h1v1h-1zM337,442h1v1h-1zM223,440h1v1h-1zM146,440h1v1h-1zM195,423h1v1h-1zM133,433h1v1h-1zM80,426h1v1h-1zM75,500h1v1h-1zM170,478h1v1h-1zM89,508h1v1h-1zM64,467h1v1h-1zM280,417h1v1h-1zM112,487h1v1h-1zM135,485h1v1h-1zM291,430h1v1h-1zM250,445h1v1h-1zM282,392h1v1h-1zM238,412h1v1h-1zM56,503h1v1h-1zM339,379h1v1h-1zM160,468h1v1h-1zM326,471h1v1h-1zM252,389h1v1h-1zM122,486h1v1h-1zM79,458h1v1h-1zM198,445h1v1h-1zM128,491h1v1h-1zM121,455h1v1h-1zM270,472h1v1h-1zM246,439h1v1h-1zM85,445h1v1h-1zM327,392h1v1h-1zM79,457h1v1h-1zM205,412h1v1h-1zM119,441h1v1h-1zM145,432h1v1h-1zM66,523h1v1h-1zM69,455h1v1h-1zM349,383h1v1h-1zM180,443h1v1h-1zM153,417h1v1h-1zM234,449h1v1h-1zM328,447h1v1h-1zM167,484h1v1h-1zM92,430h1v1h-1zM78,438h1v1h-1zM266,413h1v1h-1zM56,472h1v1h-1zM56,498h1v1h-1zM279,448h1v1h-1zM282,455h1v1h-1zM345,374h1v1h-1zM155,475h1v1h-1zM318,374h1v1h-1zM106,459h1v1h-1zM234,466h1v1h-1zM228,426h1v1h-1zM317,397h1v1h-1zM136,484h1v1h-1zM262,435h1v1h-1zM93,437h1v1h-1zM140,453h1v1h-1zM185,441h1v1h-1zM196,488h1v1h-1zM308,403h1v1h-1zM76,526h1v1h-1zM337,387h1v1h-1zM250,405h1v1h-1zM241,476h1v1h-1zM94,459h1v1h-1zM85,488h1v1h-1zM230,413h1v1h-1zM311,451h1v1h-1zM186,455h1v1h-1zM294,440h1v1h-1zM237,430h1v1h-1zM107,478h1v1h-1zM189,406h1v1h-1zM169,462h1v1h-1zM326,384h1v1h-1zM347,431h1v1h-1zM260,475h1v1h-1zM304,387h1v1h-1zM182,426h1v1h-1zM232,478h1v1h-1zM280,427h1v1h-1zM66,521h1v1h-1zM112,495h1v1h-1zM196,480h1v1h-1zM120,482h1v1h-1zM202,471h1v1h-1zM110,495h1v1h-1zM271,433h1v1h-1zM280,395h1v1h-1zM74,436h1v1h-1zM303,451h1v1h-1zM94,462h1v1h-1zM221,487h1v1h-1zM345,384h1v1h-1zM307,440h1v1h-1zM238,429h1v1h-1zM137,445h1v1h-1zM120,475h1v1h-1zM94,438h1v1h-1zM174,419h1v1h-1zM329,424h1v1h-1zM98,516h1v1h-1zM260,419h1v1h-1zM157,425h1v1h-1zM162,484h1v1h-1zM172,454h1v1h-1zM139,479h1v1h-1zM209,424h1v1h-1zM122,497h1v1h-1zM171,492h1v1h-1zM262,440h1v1h-1zM66,480h1v1h-1zM167,495h1v1h-1zM246,450h1v1h-1zM158,423h1v1h-1zM112,460h1v1h-1zM288,456h1v1h-1zM199,410h1v1h-1zM71,470h1v1h-1zM256,448h1v1h-1zM314,469h1v1h-1zM226,437h1v1h-1zM174,436h1v1h-1zM218,484h1v1h-1zM347,400h1v1h-1zM232,456h1v1h-1zM67,483h1v1h-1zM234,412h1v1h-1zM101,458h1v1h-1zM153,485h1v1h-1zM90,488h1v1h-1zM262,408h1v1h-1zM258,457h1v1h-1zM175,408h1v1h-1zM330,459h1v1h-1zM140,464h1v1h-1zM77,507h1v1h-1zM187,415h1v1h-1zM81,438h1v1h-1zM124,490h1v1h-1zM159,416h1v1h-1zM170,459h1v1h-1zM298,386h1v1h-1zM87,519h1v1h-1zM156,467h1v1h-1zM337,402h1v1h-1zM87,505h1v1h-1zM252,402h1v1h-1zM59,460h1v1h-1zM338,425h1v1h-1zM62,481h1v1h-1zM115,432h1v1h-1zM134,461h1v1h-1zM310,459h1v1h-1zM185,486h1v1h-1zM126,486h1v1h-1zM145,453h1v1h-1zM142,454h1v1h-1zM63,528h1v1h-1zM193,452h1v1h-1zM105,433h1v1h-1zM130,462h1v1h-1zM264,429h1v1h-1zM157,510h1v1h-1zM214,484h1v1h-1zM215,430h1v1h-1zM219,449h1v1h-1zM184,451h1v1h-1zM64,453h1v1h-1zM117,493h1v1h-1zM301,412h1v1h-1zM242,398h1v1h-1zM292,408h1v1h-1zM288,451h1v1h-1zM64,519h1v1h-1zM224,445h1v1h-1zM228,396h1v1h-1zM265,439h1v1h-1zM260,424h1v1h-1zM344,458h1v1h-1zM275,422h1v1h-1zM148,454h1v1h-1zM78,461h1v1h-1zM68,451h1v1h-1zM417,431h1v1h-1zM447,424h1v1h-1zM404,359h1v1h-1zM444,406h1v1h-1zM360,416h1v1h-1zM385,413h1v1h-1zM435,388h1v1h-1zM383,428h1v1h-1zM408,406h1v1h-1zM449,412h1v1h-1zM353,410h1v1h-1zM365,368h1v1h-1zM428,414h1v1h-1zM423,378h1v1h-1zM379,379h1v1h-1zM379,360h1v1h-1zM412,398h1v1h-1zM443,363h1v1h-1zM373,376h1v1h-1zM401,423h1v1h-1zM361,390h1v1h-1zM362,356h1v1h-1zM403,381h1v1h-1zM370,415h1v1h-1zM399,397h1v1h-1zM380,362h1v1h-1zM352,382h1v1h-1zM412,368h1v1h-1zM352,354h1v1h-1zM409,393h1v1h-1zM435,384h1v1h-1zM384,428h1v1h-1zM367,370h1v1h-1zM383,395h1v1h-1zM376,388h1v1h-1zM418,440h1v1h-1zM374,384h1v1h-1zM451,368h1v1h-1zM384,366h1v1h-1zM433,355h1v1h-1zM443,355h1v1h-1zM445,418h1v1h-1zM446,364h1v1h-1zM424,406h1v1h-1zM357,423h1v1h-1zM368,365h1v1h-1zM427,434h1v1h-1zM357,413h1v1h-1zM407,375h1v1h-1zM397,400h1v1h-1zM371,353h1v1h-1zM368,379h1v1h-1zM413,378h1v1h-1zM386,394h1v1h-1zM443,359h1v1h-1zM366,415h1v1h-1zM423,407h1v1h-1zM378,370h1v1h-1zM400,391h1v1h-1zM397,364h1v1h-1zM448,422h1v1h-1zM373,435h1v1h-1zM401,393h1v1h-1zM435,422h1v1h-1zM435,398h1v1h-1zM432,434h1v1h-1zM385,430h1v1h-1zM420,410h1v1h-1zM424,355h1v1h-1zM439,392h1v1h-1zM389,389h1v1h-1zM429,425h1v1h-1zM369,423h1v1h-1zM413,383h1v1h-1zM353,416h1v1h-1zM409,387h1v1h-1zM446,415h1v1h-1zM398,373h1v1h-1zM415,404h1v1h-1zM355,383h1v1h-1zM424,374h1v1h-1zM396,394h1v1h-1zM440,383h1v1h-1zM393,411h1v1h-1zM419,362h1v1h-1zM360,411h1v1h-1zM362,389h1v1h-1zM440,366h1v1h-1zM387,407h1v1h-1zM391,385h1v1h-1zM439,363h1v1h-1zM430,374h1v1h-1zM416,399h1v1h-1zM428,413h1v1h-1zM351,411h1v1h-1zM372,416h1v1h-1zM356,397h1v1h-1zM427,431h1v1h-1zM407,429h1v1h-1zM383,429h1v1h-1zM403,387h1v1h-1zM417,387h1v1h-1zM411,410h1v1h-1zM420,377h1v1h-1zM388,423h1v1h-1zM445,362h1v1h-1zM376,439h1v1h-1zM437,364h1v1h-1zM439,388h1v1h-1zM432,424h1v1h-1zM365,368h1v1h-1zM419,362h1v1h-1zM440,381h1v1h-1zM354,379h1v1h-1zM356,368h1v1h-1zM397,392h1v1h-1zM375,438h1v1h-1zM410,378h1v1h-1zM440,406h1v1h-1zM401,390h1v1h-1zM403,440h1v1h-1zM353,432h1v1h-1zM438,416h1v1h-1zM406,442h1v1h-1zM449,415h1v1h-1zM402,363h1v1h-1zM407,413h1v1h-1zM397,372h1v1h-1zM408,414h1v1h-1zM376,442h1v1h-1zM364,386h1v1h-1zM368,403h1v1h-1zM434,405h1v1h-1zM448,398h1v1h-1zM436,400h1v1h-1zM389,440h1v1h-1zM389,440h1v1h-1zM387,378h1v1h-1zM368,376h1v1h-1zM374,416h1v1h-1zM353,361h1v1h-1zM423,377h1v1h-1zM353,358h1v1h-1zM354,385h1v1h-1zM367,378h1v1h-1zM407,400h1v1h-1zM412,438h1v1h-1zM409,398h1v1h-1zM387,441h1v1h-1zM379,402h1v1h-1zM477,368h1v1h-1zM567,400h1v1h-1zM467,418h1v1h-1zM552,408h1v1h-1zM501,386h1v1h-1zM582,411h1v1h-1zM530,410h1v1h-1zM587,406h1v1h-1zM541,416h1v1h-1zM471,369h1v1h-1zM528,346h1v1h-1zM558,340h1v1h-1zM537,358h1v1h-1zM495,386h1v1h-1zM478,373h1v1h-1zM568,418h1v1h-1zM487,366h1v1h-1zM546,351h1v1h-1zM567,351h1v1h-1zM527,363h1v1h-1zM452,335h1v1h-1zM452,362h1v1h-1zM489,419h1v1h-1zM538,340h1v1h-1zM549,354h1v1h-1zM517,396h1v1h-1zM568,414h1v1h-1zM509,362h1v1h-1zM506,361h1v1h-1zM552,374h1v1h-1zM545,347h1v1h-1zM558,417h1v1h-1zM479,387h1v1h-1zM474,338h1v1h-1zM508,350h1v1h-1zM551,383h1v1h-1zM543,417h1v1h-1zM459,343h1v1h-1zM456,374h1v1h-1zM564,393h1v1h-1zM526,407h1v1h-1zM502,344h1v1h-1zM539,337h1v1h-1zM483,337h1v1h-1zM473,340h1v1h-1zM524,345h1v1h-1zM534,405h1v1h-1zM498,345h1v1h-1zM543,396h1v1h-1zM572,382h1v1h-1zM531,408h1v1h-1zM544,417h1v1h-1zM491,400h1v1h-1zM538,374h1v1h-1zM453,375h1v1h-1zM487,386h1v1h-1zM521,378h1v1h-1zM459,346h1v1h-1zM534,392h1v1h-1zM586,402h1v1h-1zM209,300h1v1h-1zM324,373h1v1h-1zM265,398h1v1h-1zM312,288h1v1h-1zM310,280h1v1h-1zM585,214h1v1h-1zM267,221h1v1h-1zM415,236h1v1h-1zM135,293h1v1h-1zM375,365h1v1h-1zM291,266h1v1h-1zM250,391h1v1h-1zM169,207h1v1h-1zM525,306h1v1h-1zM126,233h1v1h-1zM527,362h1v1h-1zM90,346h1v1h-1zM169,298h1v1h-1zM376,215h1v1h-1zM551,275h1v1h-1zM132,368h1v1h-1zM113,212h1v1h-1zM401,303h1v1h-1zM533,371h1v1h-1zM165,214h1v1h-1zM375,303h1v1h-1zM215,397h1v1h-1zM166,340h1v1h-1zM94,398h1v1h-1zM558,334h1v1h-1zM225,357h1v1h-1zM534,371h1v1h-1zM77,310h1v1h-1zM130,319h1v1h-1z" fill="#fcfc00"/><polyline points="55.2,256.7 57.2,260.0 59.4,257.1 63.1,261.3 65.5,258.1 68.4,260.4 71.7,255.7 73.6,259.1 76.9,257.4 79.1,256.7 80.4,259.4 81.2,265.3 81.6,280.0 82.5,297.0 83.2,350.0 83.8,405.0 84.5,432.0 85.0,404.0 85.8,403.0 85.8,348.0 86.8,347.0 86.8,290.0 87.5,280.0 88.1,262.0 89.4,258.7 92.3,269.6 95.3,260.7 97.2,255.4 100.5,261.3 103.8,255.4 105.8,260.0 106.7,251.5 108.4,241.7 110.6,254.8 113.6,258.7 116.3,249.5 119.6,255.7 122.8,254.8 125.5,256.7 127.7,256.1 130.7,238.4 132.4,238.4 135.6,256.1 138.2,238.4 140.6,253.5 142.5,256.1 146.5,257.4 148.4,256.7 151.4,240.3 154.3,255.4 156.6,259.4 162.2,251.5 167.5,254.8 170.7,261.3 175.3,253.5 181.2,256.1 183.6,248.2 186.5,258.1 189.1,252.8 186.3,258.7 188.9,252.5 192.9,253.5 197.5,252.2 199.4,254.4 202.3,259.4 204.9,253.5 207.6,253.9 208.4,263.3 209.0,280.4 209.9,298.7 210.6,307.9 211.2,296.1 212.2,279.7 212.8,262.0 213.6,252.2 216.5,250.4 219.4,251.2 226.3,244.3 235.5,244.3 237.5,245.6 242.7,244.3 245.6,250.2 248.0,259.4 250.4,267.2 253.2,263.3 255.9,251.5 258.2,241.0 263.7,247.6 267.4,250.4 271.6,258.1 275.6,274.5 276.2,258.1 277.5,252.2 281.5,260.7 285.4,267.2 288.7,254.4 291.6,258.1 293.7,264.6 296.3,266.6 301.1,257.4 303.8,269.9 306.4,286.9 307.7,293.5 309.0,269.9 309.4,262.0 311.6,281.7 312.6,287.6 314.3,272.5 315.6,263.3 317.3,264.6 320.8,261.3 323.5,265.3 324.6,273.8 324.6,275.4 326.6,286.6 328.5,275.4 330.8,285.9 334.2,275.7 336.4,287.2 339.4,275.7 342.3,286.2 347.6,271.5 350.4,284.6 352.2,275.4 355.4,275.4 358.3,297.1 360.7,280.7 366.2,287.0 368.6,271.5 369.6,296.4 371.4,322.7 373.5,303.0 375.1,297.1 377.1,298.4 379.7,288.8 384.3,287.2 387.6,287.2 390.6,289.6 393.5,287.2 402.7,287.2 405.3,293.8 407.9,300.4 410.6,301.0 413.8,306.3 417.1,307.6 419.5,299.7 423.7,303.6 426.0,304.3 427.6,302.3 429.4,309.1 431.1,317.9 433.5,328.4 436.2,315.5 438.5,327.6 441.3,315.5 444.0,326.7 446.4,314.9 447.9,335.4 449.5,359.5 450.7,336.0 452.6,313.5 454.2,314.3 457.5,337.2 460.4,318.4 462.4,324.9 465.1,316.7 466.7,322.0 468.7,336.0 471.6,328.4 473.7,324.9 477.4,324.3 481.0,325.7 482.7,331.3 485.1,340.7 487.4,346.0 489.8,327.8 492.1,335.4 495.0,337.8 497.4,357.7 500.9,337.8 503.5,344.8 506.8,339.5 509.3,337.4 511.4,337.4 513.8,349.2 516.7,346.6 519.4,356.5 521.5,346.9 524.4,356.9 527.5,348.1 530.0,346.2 532.5,348.1 535.0,356.9 538.1,361.2 540.6,361.0 543.5,358.8 546.5,371.9 548.1,361.9 550.0,361.2 554.4,361.2 556.9,371.9 559.8,363.8 561.5,378.1 563.1,385.0 566.9,372.5 568.8,371.2 572.2,371.9 575.0,384.4 578.8,388.1 583.5,396.9 586.2,390.6 589.0,388.1" fill="none" stroke="#18b4f4" stroke-width="1" shape-rendering="crispEdges" stroke-linejoin="bevel"/></svg><div class="t" style="left:57px;top:197.98px;font-size:14.5px;line-height:18px;color:#8c96a0;transform:scaleX(0.919);transform-origin:0 0;">trial version</div><div class="t" style="left:54.6px;top:182.18px;font-size:14.5px;line-height:18px;color:#000;transform:scaleX(0.919);transform-origin:0 0;">MB/s</div><div class="t" style="left:571.5px;top:182.18px;font-size:14.5px;line-height:18px;color:#000;transform:scaleX(0.919);transform-origin:0 0;">ms</div><div class="t" style="left:9.5px;top:190.08px;font-size:14.5px;line-height:18px;color:#000;width:40.5px;text-align:right;transform:scaleX(0.875);transform-origin:100% 0;">100</div><div class="t" style="left:9.5px;top:228.08px;font-size:14.5px;line-height:18px;color:#000;width:40.5px;text-align:right;transform:scaleX(0.875);transform-origin:100% 0;">90</div><div class="t" style="left:9.5px;top:266.08px;font-size:14.5px;line-height:18px;color:#000;width:40.5px;text-align:right;transform:scaleX(0.875);transform-origin:100% 0;">80</div><div class="t" style="left:9.5px;top:305.08px;font-size:14.5px;line-height:18px;color:#000;width:40.5px;text-align:right;transform:scaleX(0.875);transform-origin:100% 0;">70</div><div class="t" style="left:9.5px;top:343.08px;font-size:14.5px;line-height:18px;color:#000;width:40.5px;text-align:right;transform:scaleX(0.875);transform-origin:100% 0;">60</div><div class="t" style="left:9.5px;top:382.08px;font-size:14.5px;line-height:18px;color:#000;width:40.5px;text-align:right;transform:scaleX(0.875);transform-origin:100% 0;">50</div><div class="t" style="left:9.5px;top:420.08px;font-size:14.5px;line-height:18px;color:#000;width:40.5px;text-align:right;transform:scaleX(0.875);transform-origin:100% 0;">40</div><div class="t" style="left:9.5px;top:458.08px;font-size:14.5px;line-height:18px;color:#000;width:40.5px;text-align:right;transform:scaleX(0.875);transform-origin:100% 0;">30</div><div class="t" style="left:9.5px;top:497.08px;font-size:14.5px;line-height:18px;color:#000;width:40.5px;text-align:right;transform:scaleX(0.875);transform-origin:100% 0;">20</div><div class="t" style="left:9.5px;top:535.08px;font-size:14.5px;line-height:18px;color:#000;width:40.5px;text-align:right;transform:scaleX(0.875);transform-origin:100% 0;">10</div><div class="t" style="left:594px;top:190.08px;font-size:14.5px;line-height:18px;color:#000;transform:scaleX(0.875);transform-origin:0 0;">50</div><div class="t" style="left:594px;top:228.08px;font-size:14.5px;line-height:18px;color:#000;transform:scaleX(0.875);transform-origin:0 0;">45</div><div class="t" style="left:594px;top:266.08px;font-size:14.5px;line-height:18px;color:#000;transform:scaleX(0.875);transform-origin:0 0;">40</div><div class="t" style="left:594px;top:305.08px;font-size:14.5px;line-height:18px;color:#000;transform:scaleX(0.875);transform-origin:0 0;">35</div><div class="t" style="left:594px;top:343.08px;font-size:14.5px;line-height:18px;color:#000;transform:scaleX(0.875);transform-origin:0 0;">30</div><div class="t" style="left:594px;top:382.08px;font-size:14.5px;line-height:18px;color:#000;transform:scaleX(0.875);transform-origin:0 0;">25</div><div class="t" style="left:594px;top:420.08px;font-size:14.5px;line-height:18px;color:#000;transform:scaleX(0.875);transform-origin:0 0;">20</div><div class="t" style="left:594px;top:458.08px;font-size:14.5px;line-height:18px;color:#000;transform:scaleX(0.875);transform-origin:0 0;">15</div><div class="t" style="left:594px;top:497.08px;font-size:14.5px;line-height:18px;color:#000;transform:scaleX(0.875);transform-origin:0 0;">10</div><div class="t" style="left:594px;top:535.08px;font-size:14.5px;line-height:18px;color:#000;transform:scaleX(0.875);transform-origin:0 0;">5</div><div class="t" style="left:24.3px;top:586.18px;font-size:14.5px;line-height:18px;color:#000;width:60px;text-align:center;transform:scaleX(0.875);transform-origin:50% 0;">0</div><div class="t" style="left:77.7px;top:586.18px;font-size:14.5px;line-height:18px;color:#000;width:60px;text-align:center;transform:scaleX(0.875);transform-origin:50% 0;">75</div><div class="t" style="left:131.10000000000002px;top:586.18px;font-size:14.5px;line-height:18px;color:#000;width:60px;text-align:center;transform:scaleX(0.875);transform-origin:50% 0;">150</div><div class="t" style="left:184.5px;top:586.18px;font-size:14.5px;line-height:18px;color:#000;width:60px;text-align:center;transform:scaleX(0.875);transform-origin:50% 0;">225</div><div class="t" style="left:237.90000000000003px;top:586.18px;font-size:14.5px;line-height:18px;color:#000;width:60px;text-align:center;transform:scaleX(0.875);transform-origin:50% 0;">300</div><div class="t" style="left:291.3px;top:586.18px;font-size:14.5px;line-height:18px;color:#000;width:60px;text-align:center;transform:scaleX(0.875);transform-origin:50% 0;">375</div><div class="t" style="left:344.7px;top:586.18px;font-size:14.5px;line-height:18px;color:#000;width:60px;text-align:center;transform:scaleX(0.875);transform-origin:50% 0;">450</div><div class="t" style="left:398.1px;top:586.18px;font-size:14.5px;line-height:18px;color:#000;width:60px;text-align:center;transform:scaleX(0.875);transform-origin:50% 0;">525</div><div class="t" style="left:451.5px;top:586.18px;font-size:14.5px;line-height:18px;color:#000;width:60px;text-align:center;transform:scaleX(0.875);transform-origin:50% 0;">600</div><div class="t" style="left:504.8999999999999px;top:586.18px;font-size:14.5px;line-height:18px;color:#000;width:60px;text-align:center;transform:scaleX(0.875);transform-origin:50% 0;">675</div><div class="t" style="left:558.3px;top:586.18px;font-size:14.5px;line-height:18px;color:#000;width:60px;text-align:center;transform:scaleX(0.875);transform-origin:50% 0;">750gB</div><div style="left:118px;top:163px;width:1px;height:1px;background:#f0f000;"></div><div style="left:232px;top:207px;width:1px;height:1px;background:#f0f000;"></div><div style="left:266px;top:201px;width:1px;height:1px;background:#f0f000;"></div><div style="left:284px;top:188px;width:1px;height:1px;background:#f0f000;"></div><div style="left:59px;top:170px;width:1px;height:1px;background:#f0f000;"></div><div style="left:365px;top:169px;width:1px;height:1px;background:#f0f000;"></div><div style="left:634px;top:176px;width:98px;height:26px;border:1px solid #3c7fb1;border-radius:3px;background:linear-gradient(#eaf6fd 0,#d9f0fc 48%,#bee6fd 50%,#a7d9f5 100%);box-shadow:inset 0 0 0 1px #36c4f0, inset 0 0 0 2px rgba(255,255,255,.55);"></div><div class="t" style="left:634px;top:179.98px;font-size:14.5px;line-height:18px;color:#000;width:98px;text-align:center;transform:scaleX(0.919);transform-origin:50% 0;">Start</div><div style="left:623px;top:215px;width:135px;height:1px;background:#8c8c8c;"></div><div style="left:629px;top:223px;width:16px;height:16px;border-radius:8px;border:1.3px solid #858688;background:#fdfdfd;"></div><div style="left:631.5px;top:225.5px;width:11px;height:11px;border-radius:6px;background:radial-gradient(circle at 62% 68%,#f8f8f8 0,#dfe1e3 55%,#bcc1c6 100%);"></div><div style="left:632.5px;top:226.5px;width:9px;height:9px;border-radius:5px;background:#14304a;"></div><div style="left:633.6px;top:227.6px;width:6.8px;height:6.8px;border-radius:4px;background:radial-gradient(circle at 38% 30%,#e4f8ff 0,#58bcec 32%,#2590cc 65%,#1a6ea6 100%);"></div><div class="t" style="left:647.8px;top:222.18px;font-size:14.5px;line-height:18px;color:#000;transform:scaleX(0.919);transform-origin:0 0;">Read</div><div style="left:629px;top:243px;width:16px;height:16px;border-radius:8px;border:1.3px solid #858688;background:#fdfdfd;"></div><div style="left:631.5px;top:245.5px;width:11px;height:11px;border-radius:6px;background:radial-gradient(circle at 62% 68%,#f8f8f8 0,#dfe1e3 55%,#bcc1c6 100%);"></div><div class="t" style="left:647.8px;top:242.18px;font-size:14.5px;line-height:18px;color:#000;transform:scaleX(0.919);transform-origin:0 0;">Write</div><div style="left:623px;top:263px;width:135px;height:1px;background:#8c8c8c;"></div><div style="left:629px;top:273px;width:16px;height:16px;border:1px solid #8e8f8f;background:#f4f4f4;"></div><div style="left:631px;top:275px;width:12px;height:12px;border:1px solid;border-color:#b2b6bd #e2e3e6 #e2e3e6 #b2b6bd;background:linear-gradient(135deg,#cbcfd5 0%,#dfe1e4 45%,#f2f2f2 100%);"></div><div class="t" style="left:647.6px;top:272.28px;font-size:14.5px;line-height:18px;color:#000;transform:scaleX(0.919);transform-origin:0 0;">Short stroke</div><div style="left:629px;top:297px;width:82px;height:24px;border:1px solid #b4b4b4;border-radius:2px;background:#fff;"></div><div class="t" style="left:632px;top:299.18px;font-size:14.5px;line-height:18px;color:#8a8a8a;transform:scaleX(0.875);transform-origin:0 0;">40</div><div style="left:690px;top:299px;width:19px;height:9px;border:1px solid #c0c0c0;background:linear-gradient(#f4f4f4,#e6e6e6);box-shadow:inset 0 0 0 1px rgba(255,255,255,.7);"></div><svg style="left:696.0px;top:301.2px" width="7" height="4" viewBox="0 0 7 4"><polygon points="0,4 3.5,0 7,4" fill="#a0a0a0"/></svg><div style="left:690px;top:310px;width:19px;height:9px;border:1px solid #c0c0c0;background:linear-gradient(#f4f4f4,#e6e6e6);box-shadow:inset 0 0 0 1px rgba(255,255,255,.7);"></div><svg style="left:696.0px;top:312.8px" width="7" height="4" viewBox="0 0 7 4"><polygon points="0,0 7,0 3.5,4" fill="#a0a0a0"/></svg><div class="t" style="left:727.5px;top:300.68px;font-size:14.5px;line-height:18px;color:#000;transform:scaleX(0.919);transform-origin:0 0;">gB</div><div style="left:629px;top:333px;width:16px;height:16px;border:1px solid #8e8f8f;background:#f4f4f4;"></div><div style="left:631px;top:335px;width:12px;height:12px;border:1px solid;border-color:#b2b6bd #e2e3e6 #e2e3e6 #b2b6bd;background:linear-gradient(135deg,#cbcfd5 0%,#dfe1e4 45%,#f2f2f2 100%);"></div><svg style="left:631px;top:334px" width="13" height="13" viewBox="0 0 13 13"><path d="M2.2,6.6 L3.6,5.8 L5.2,8.6 Q7.4,4 11.4,1.2 L11.8,1.8 Q8.4,5.6 5.8,11.6 L4.6,11.6 Z" fill="#40508e" stroke="#31437e" stroke-width=".5"/></svg><div class="t" style="left:648.5px;top:332.28px;font-size:14.5px;line-height:18px;color:#000;transform:scaleX(0.919);transform-origin:0 0;">Transfer rate</div><div style="left:623px;top:351px;width:135px;height:1px;background:#8c8c8c;"></div><div class="t" style="left:628.3px;top:353.98px;font-size:14.5px;line-height:18px;color:#000;transform:scaleX(0.919);transform-origin:0 0;">Minimum</div><div style="left:629px;top:373px;width:123px;height:19px;background:#000;border:1px solid;border-color:#8a8a8a #fff #fff #8a8a8a;"></div><div class="t" style="left:629px;top:373.21px;font-size:14.4px;line-height:18px;color:#1eb4f2;font-weight:bold;width:123px;text-align:center;letter-spacing:0px;">39.3 MB/s</div><div class="t" style="left:628.3px;top:393.98px;font-size:14.5px;line-height:18px;color:#000;transform:scaleX(0.919);transform-origin:0 0;">Maximum</div><div style="left:629px;top:413px;width:123px;height:19px;background:#000;border:1px solid;border-color:#8a8a8a #fff #fff #8a8a8a;"></div><div class="t" style="left:629px;top:413.21px;font-size:14.4px;line-height:18px;color:#1eb4f2;font-weight:bold;width:123px;text-align:center;letter-spacing:0px;">89.7 MB/s</div><div class="t" style="left:629px;top:432.18px;font-size:14.5px;line-height:18px;color:#000;transform:scaleX(0.919);transform-origin:0 0;">Average</div><div style="left:629px;top:451px;width:123px;height:19px;background:#000;border:1px solid;border-color:#8a8a8a #fff #fff #8a8a8a;"></div><div class="t" style="left:629px;top:451.21px;font-size:14.4px;line-height:18px;color:#1eb4f2;font-weight:bold;width:123px;text-align:center;letter-spacing:0px;">75.9 MB/s</div><div style="left:623px;top:479px;width:135px;height:1px;background:#8c8c8c;"></div><div style="left:629px;top:487px;width:16px;height:16px;border:1px solid #8e8f8f;background:#f4f4f4;"></div><div style="left:631px;top:489px;width:12px;height:12px;border:1px solid;border-color:#b2b6bd #e2e3e6 #e2e3e6 #b2b6bd;background:linear-gradient(135deg,#cbcfd5 0%,#dfe1e4 45%,#f2f2f2 100%);"></div><svg style="left:631px;top:488px" width="13" height="13" viewBox="0 0 13 13"><path d="M2.2,6.6 L3.6,5.8 L5.2,8.6 Q7.4,4 11.4,1.2 L11.8,1.8 Q8.4,5.6 5.8,11.6 L4.6,11.6 Z" fill="#40508e" stroke="#31437e" stroke-width=".5"/></svg><div class="t" style="left:648.5px;top:486.18px;font-size:14.5px;line-height:18px;color:#000;transform:scaleX(0.919);transform-origin:0 0;">Access time</div><div style="left:629px;top:505px;width:123px;height:19px;background:#000;border:1px solid;border-color:#8a8a8a #fff #fff #8a8a8a;"></div><div class="t" style="left:629px;top:505.21px;font-size:14.4px;line-height:18px;color:#f8f820;font-weight:bold;width:123px;text-align:center;letter-spacing:0px;">19.9 ms</div><div style="left:629px;top:529px;width:16px;height:16px;border:1px solid #8e8f8f;background:#f4f4f4;"></div><div style="left:631px;top:531px;width:12px;height:12px;border:1px solid;border-color:#b2b6bd #e2e3e6 #e2e3e6 #b2b6bd;background:linear-gradient(135deg,#cbcfd5 0%,#dfe1e4 45%,#f2f2f2 100%);"></div><svg style="left:631px;top:530px" width="13" height="13" viewBox="0 0 13 13"><path d="M2.2,6.6 L3.6,5.8 L5.2,8.6 Q7.4,4 11.4,1.2 L11.8,1.8 Q8.4,5.6 5.8,11.6 L4.6,11.6 Z" fill="#40508e" stroke="#31437e" stroke-width=".5"/></svg><div class="t" style="left:647.8px;top:528.18px;font-size:14.5px;line-height:18px;color:#000;transform:scaleX(0.919);transform-origin:0 0;">Burst rate</div><div style="left:629px;top:547px;width:123px;height:19px;background:#000;border:1px solid;border-color:#8a8a8a #fff #fff #8a8a8a;"></div><div class="t" style="left:629px;top:547.21px;font-size:14.4px;line-height:18px;color:#fff;font-weight:bold;width:123px;text-align:center;letter-spacing:0px;">119.7 MB/s</div><div class="t" style="left:628.3px;top:568.18px;font-size:14.5px;line-height:18px;color:#000;transform:scaleX(0.919);transform-origin:0 0;">CPU usage</div><div style="left:629px;top:587px;width:123px;height:19px;background:#000;border:1px solid;border-color:#8a8a8a #fff #fff #8a8a8a;"></div><div class="t" style="left:629px;top:587.21px;font-size:14.4px;line-height:18px;color:#fff;font-weight:bold;width:123px;text-align:center;letter-spacing:0px;">4.7%</div></div><div class="win" style="left:800px;"><div style="left:0;top:0;width:9px;height:9px;background:#0b1d33;"></div><div style="left:779px;top:0;width:9px;height:9px;background:#0d3566;"></div><div style="left:0;top:631px;width:9px;height:9px;background:#0a2f5c;"></div><div style="left:779px;top:631px;width:9px;height:9px;background:#c4c4c4;"></div><div style="left:0;top:0;width:788px;height:640px;border-radius:8px 8px 7px 7px;background:#f4f6f8;"></div><div style="left:0;top:0;width:788px;height:36px;border-radius:8px 8px 0 0;background:linear-gradient(to right,#344d6a 0px,#38526f 220px,#27558a 245px,#1f487a 370px,#1e4a7e 430px,#3470ae 560px,#4687c8 650px,#5a9edd 720px,#6cb1ee 788px);"></div><div style="left:330px;top:24px;width:450px;height:11px;background:linear-gradient(to bottom,rgba(255,255,255,0) 0,rgba(215,235,255,.45) 55%,rgba(240,248,255,.95) 100%);-webkit-mask-image:linear-gradient(to right,transparent,#000 60px);mask-image:linear-gradient(to right,transparent,#000 60px);"></div><div style="left:0;top:30px;width:9px;height:610px;background:linear-gradient(to bottom,#38526f 0,#314d6c 40px,#25466b 150px,#1e4d84 380px,#1f5998 600px);"></div><div style="left:779px;top:30px;width:9px;height:610px;background:linear-gradient(to bottom,#6cb1ee 0,#a8daf6 10px,#c8ecfb 18px,#9accf4 26px,#8cc4f2 32px,#d4effc 40px,#eefafe 54px,#cde6fa 60px,#f4f8fb 68px,#f4f6f8 118px,#a8d2f6 125px,#f4f6f8 133px,#f4f6f8 185px,#c8e2f8 192px,#f4f6f8 200px,#f4f6f8 610px);"></div><div style="left:0;top:631px;width:788px;height:9px;border-radius:0 0 7px 7px;background:linear-gradient(to right,#1f5894 0,#1c4c84 180px,#1f5288 228px,#dff6ff 244px,#effdff 285px,#cdeefb 291px,#f2fdff 300px,#ffffff 360px,#f6f6f6 500px,#f3f3f3 788px);"></div><div style="left:22px;top:9px;width:350px;height:18px;border-radius:9px;background:rgba(255,255,255,.55);filter:blur(6px);"></div><div style="left:0;top:0;width:788px;height:640px;border-radius:8px 8px 7px 7px;border:1px solid;border-color:#16222f #4c5560 #3b4148 #14263b;"></div><div style="left:1px;top:1px;width:786px;height:638px;border-radius:7px 7px 6px 6px;border:1px solid rgba(255,255,255,.55);"></div><div style="left:7px;top:34px;width:774px;height:599px;border:1px solid rgba(255,255,255,.7);border-radius:1px;"></div><div style="left:8px;top:35px;width:772px;height:597px;border:1px solid;border-color:#53606e #7e8894 #6a7077 #34465c;background:#f0f0f0;"></div><div style="left:9px;top:117px;width:1px;height:514px;background:#fff;"></div><div style="left:9px;top:629px;width:770px;height:2px;background:#fff;"></div><svg style="left:9px;top:7px" width="22" height="21" viewBox="0 0 22 21"><polygon points="1,11 10.5,2.5 19.5,8 19.5,10.5 9,19.5 1,13.5" fill="#262626"/><polygon points="1,11 10.5,2.5 19.5,8 9,17" fill="#444"/><polygon points="3,12.4 9,17 13,13.4 7.4,10" fill="#8a8a8a" opacity=".75"/><polygon points="4.6,13.8 9,17.2 10.6,15.8 6.2,12.6" fill="#c8c8c8" opacity=".8"/><ellipse cx="11" cy="8" rx="5.6" ry="4.1" fill="#eab86c"/><ellipse cx="10.4" cy="7.2" rx="3.6" ry="2.4" fill="#f6d59a"/><rect x="10" y="6.6" width="2.8" height="2.4" fill="#c2c6d2"/><polygon points="7.6,10.4 8.6,10 8.4,13.6 7.2,14" fill="#f0f0f0"/></svg><div class="t" style="left:34px;top:9.91px;font-size:14.68px;line-height:18px;color:#000;-webkit-text-stroke:0.1px #000;">HD Tune Pro 5.00 - Hard Disk Utility (trial version)</div><div style="left:651px;top:0px;width:130px;height:26px;border:1px solid rgba(20,40,70,.55);border-top:none;border-radius:0 0 6px 6px;"></div><div style="left:652px;top:1px;width:128px;height:24px;border:1px solid rgba(255,255,255,.45);border-top:none;border-radius:0 0 5px 5px;background:linear-gradient(rgba(255,255,255,.12),rgba(255,255,255,.02));"></div><div style="left:686px;top:1px;width:1px;height:24px;background:rgba(20,40,70,.45);"></div><div style="left:687px;top:1px;width:1px;height:23px;background:rgba(255,255,255,.4);"></div><div style="left:719px;top:1px;width:1px;height:24px;background:rgba(20,40,70,.45);"></div><div style="left:720px;top:1px;width:1px;height:23px;background:rgba(255,255,255,.4);"></div><div style="left:662px;top:15px;width:17px;height:5px;background:linear-gradient(#ffffff 0,#f4f4f4 45%,#d6d6d6 100%);border:1px solid #535b66;border-radius:1px;"></div><div style="left:694px;top:6px;width:18px;height:14px;background:linear-gradient(#ffffff 0,#f4f4f4 45%,#d6d6d6 100%);border:1px solid #535b66;border-radius:1.5px;"></div><div style="left:698px;top:10px;width:10px;height:6px;background:#4c88c6;border:1px solid #535b66;"></div><svg style="left:742px;top:5px" width="18" height="16" viewBox="0 0 18 16"><defs><linearGradient id="xg" x1="0" y1="0" x2="0" y2="1"><stop offset="0" stop-color="#fff"/><stop offset=".5" stop-color="#f0f0f0"/><stop offset="1" stop-color="#d0d0d0"/></linearGradient></defs><path d="M1.6,1.5 L6.2,1.5 L9,5 L11.8,1.5 L16.4,1.5 L11.3,7.8 L16.6,14.5 L12,14.5 L9,10.6 L6,14.5 L1.4,14.5 L6.7,7.8 Z" fill="url(#xg)" stroke="#535b66" stroke-width="1" stroke-linejoin="round"/></svg><div style="left:9px;top:36px;width:770px;height:24px;background:linear-gradient(#e0e6ee,#dce3ec);"></div><div class="t" style="left:18px;top:39.94px;font-size:14.6px;line-height:18px;color:#7d7d80;-webkit-text-stroke:0;"><u>F</u>ile</div><div class="t" style="left:63px;top:39.94px;font-size:14.6px;line-height:18px;color:#7d7d80;-webkit-text-stroke:0;"><u>H</u>elp</div><div style="left:9px;top:60px;width:770px;height:55px;background:linear-gradient(#f2f2f2 0,#ebebeb 40%,#d3d3d3 100%);"></div><div style="left:9px;top:115px;width:770px;height:1px;background:#101010;"></div><div style="left:9px;top:116px;width:770px;height:1px;background:#fafafa;"></div><div class="btn" style="left:23px;top:71px;width:298px;height:24px;"></div><div class="t" style="left:26.3px;top:73.98px;font-size:14.5px;line-height:18px;color:#000;transform:scaleX(0.919);transform-origin:0 0;letter-spacing:-0.09px;">WDC WD7500BPVT-24HXZ</div><div class="t" style="left:207.3px;top:73.98px;font-size:14.5px;line-height:18px;color:#000;transform:scaleX(0.919);transform-origin:0 0;">(750 gB)</div><svg style="left:306px;top:81px" width="9" height="5" viewBox="0 0 9 5"><polygon points="0,0 9,0 4.5,5" fill="#000"/></svg><div class="btn" style="left:336px;top:68px;width:36px;height:32px;"></div><svg style="left:347px;top:74px" width="14" height="22" viewBox="0 0 14 22"><rect x="5" y="1" width="5" height="14" rx="1.6" fill="#101010"/><rect x="5.6" y="2" width="2.6" height="3.4" fill="#38e4f4"/><rect x="5.6" y="5.2" width="2.6" height="9" fill="#f01818"/><circle cx="6.9" cy="14.4" r="4.4" fill="#101010"/><circle cx="6.5" cy="14.1" r="3.7" fill="#ee1414"/><path d="M3,12 q-1.2,2.2 0,4.4" stroke="#58dcec" stroke-width="1.5" fill="none"/><rect x="5.6" y="10" width="2.6" height="3" fill="#f01818"/><path d="M4.8,13.4 q0.4,1.6 2,2" stroke="#fff" stroke-width="1.1" fill="none"/></svg><div class="t" style="left:377px;top:75.98px;font-size:14.5px;line-height:18px;color:#000;font-weight:bold;transform:scaleX(0.975);transform-origin:0 0;letter-spacing:0.2px;">39°C</div><div class="btn" style="left:472px;top:68px;width:36px;height:32px;"></div><svg style="left:481px;top:75px" width="18" height="18" viewBox="0 0 18 18" shape-rendering="crispEdges"><path d="M1.5,1.5 h5 l3,3 v9 h-8 z" fill="#fff" stroke="#000" stroke-width="1"/><path d="M6.5,1.5 v3 h3" fill="#d8d8d8" stroke="#000" stroke-width="1"/><rect x="10" y="5" width="1" height="10" fill="#555"/><rect x="2" y="14" width="9" height="1" fill="#555"/><rect x="3" y="4" width="3" height="1" fill="#2e9bff"/><rect x="3" y="6" width="5" height="1" fill="#2e9bff"/><rect x="3" y="8" width="5" height="1" fill="#2e9bff"/><rect x="3" y="10" width="5" height="1" fill="#2e9bff"/><path d="M7.5,3.5 h5 l3,3 v9 h-8 z" fill="#fff" stroke="#000" stroke-width="1"/><path d="M12.5,3.5 v3 h3" fill="#d8d8d8" stroke="#000" stroke-width="1"/><rect x="16" y="7" width="1" height="10" fill="#555"/><rect x="8" y="16" width="9" height="1" fill="#555"/><rect x="9" y="6" width="3" height="1" fill="#2e9bff"/><rect x="9" y="8" width="5" height="1" fill="#2e9bff"/><rect x="9" y="10" width="5" height="1" fill="#2e9bff"/><rect x="9" y="12" width="5" height="1" fill="#2e9bff"/></svg><div class="btn" style="left:512px;top:68px;width:36px;height:32px;"></div><svg style="left:521px;top:75px" width="18" height="18" viewBox="0 0 18 18" shape-rendering="crispEdges"><path d="M1.5,1.5 h5 l3,3 v9 h-8 z" fill="#fff" stroke="#000" stroke-width="1"/><path d="M6.5,1.5 v3 h3" fill="#d8d8d8" stroke="#000" stroke-width="1"/><rect x="10" y="5" width="1" height="10" fill="#555"/><rect x="2" y="14" width="9" height="1" fill="#555"/><rect x="3" y="5" width="5" height="2" fill="#28c8e8"/><rect x="3" y="7" width="5" height="4" fill="#20d838"/><rect x="4" y="7" width="2" height="2" fill="#f02020"/><rect x="5" y="9" width="2" height="1" fill="#f0e020"/><path d="M7.5,3.5 h5 l3,3 v9 h-8 z" fill="#fff" stroke="#000" stroke-width="1"/><path d="M12.5,3.5 v3 h3" fill="#d8d8d8" stroke="#000" stroke-width="1"/><rect x="16" y="7" width="1" height="10" fill="#555"/><rect x="8" y="16" width="9" height="1" fill="#555"/><rect x="9" y="7" width="5" height="2" fill="#28c8e8"/><rect x="9" y="9" width="5" height="4" fill="#20d838"/><rect x="10" y="9" width="2" height="2" fill="#f02020"/><rect x="11" y="11" width="2" height="1" fill="#f0e020"/></svg><div class="btn" style="left:552px;top:68px;width:36px;height:32px;"></div><svg style="left:561px;top:75px" width="18" height="18" viewBox="0 0 18 18" shape-rendering="crispEdges"><path d="M1.5,1.5 h14 v14 h-12.5 l-1.5,-1.5 z" fill="#2626e6" stroke="#000" stroke-width="1"/><rect x="2" y="2" width="1" height="12" fill="#7a7aff"/><rect x="4" y="2" width="10" height="7" fill="#c4c4c4"/><rect x="5" y="3" width="8" height="1" fill="#8a8a8a"/><rect x="5" y="5" width="8" height="1" fill="#8a8a8a"/><rect x="5" y="7" width="8" height="1" fill="#8a8a8a"/><rect x="5" y="11" width="9" height="4" fill="#a8a8a8"/><rect x="5" y="11" width="9" height="1" fill="#333"/><rect x="11" y="12" width="2" height="3" fill="#fff"/><rect x="16" y="3" width="1" height="14" fill="#444"/><rect x="4" y="16" width="13" height="1" fill="#444"/></svg><div class="btn" style="left:592px;top:68px;width:36px;height:32px;"></div><svg style="left:601px;top:75px" width="18" height="18" viewBox="0 0 18 18"><polygon points="15.10,11.00 13.50,12.12 13.84,14.04 11.92,13.70 10.80,15.30 9.68,13.70 7.76,14.04 8.10,12.12 6.50,11.00 8.10,9.88 7.76,7.96 9.68,8.30 10.80,6.70 11.92,8.30 13.84,7.96 13.50,9.88" fill="#e6e000" stroke="#1a1a00" stroke-width="1.5" stroke-linejoin="round"/><polygon points="15.10,11.00 13.50,12.12 13.84,14.04 11.92,13.70 10.80,15.30 9.68,13.70 7.76,14.04 8.10,12.12 6.50,11.00 8.10,9.88 7.76,7.96 9.68,8.30 10.80,6.70 11.92,8.30 13.84,7.96 13.50,9.88" fill="#e6e000"/><rect x="9.8" y="5.5" width="2" height="6.3" fill="#9a9a9a" stroke="#333" stroke-width=".6"/><polygon points="10.10,6.20 8.50,7.32 8.84,9.24 6.92,8.90 5.80,10.50 4.68,8.90 2.76,9.24 3.10,7.32 1.50,6.20 3.10,5.08 2.76,3.16 4.68,3.50 5.80,1.90 6.92,3.50 8.84,3.16 8.50,5.08" fill="#e6e000" stroke="#1a1a00" stroke-width="1.5" stroke-linejoin="round"/><polygon points="10.10,6.20 8.50,7.32 8.84,9.24 6.92,8.90 5.80,10.50 4.68,8.90 2.76,9.24 3.10,7.32 1.50,6.20 3.10,5.08 2.76,3.16 4.68,3.50 5.80,1.90 6.92,3.50 8.84,3.16 8.50,5.08" fill="#e6e000"/><rect x="4.8" y="0.7000000000000004" width="2" height="6.3" fill="#9a9a9a" stroke="#333" stroke-width=".6"/></svg><div class="btn" style="left:638px;top:68px;width:36px;height:32px;"></div><svg style="left:647px;top:75px;margin-left:-2px;margin-top:-2px" width="22" height="22" viewBox="0 0 22 22"><defs><linearGradient id="pg" x1="0" y1="0" x2="1" y2="1"><stop offset="0" stop-color="#e070e0"/><stop offset="0.35" stop-color="#c020c8"/><stop offset="0.7" stop-color="#b000b8"/><stop offset="1" stop-color="#8a0090"/></linearGradient></defs><rect x="0.5" y="0.5" width="20" height="20" rx="2.5" fill="#fff" opacity=".85"/><rect x="1" y="1" width="19" height="19" rx="2.2" fill="url(#pg)"/><rect x="1" y="17.5" width="19" height="2.5" rx="1.5" fill="#78007e" opacity=".7"/><rect x="9.3" y="3.4" width="2" height="10" fill="#fff"/><polygon points="4,12.4 16.4,12.4 10.3,18.4" fill="#fff"/></svg><div class="btn" style="left:694px;top:68px;width:70px;height:32px;"></div><div class="t" style="left:694px;top:74.98px;font-size:14.5px;line-height:18px;color:#000;width:70px;text-align:center;transform:scaleX(0.919);transform-origin:50% 0;">Exit</div><div style="left:23px;top:159px;width:740px;height:469px;background:#fff;border:1px solid #898c95;"></div><div class="tab" style="left:25px;top:119px;width:140px;height:21px;"></div><svg style="left:48.8px;top:121px" width="16" height="16" viewBox="0 0 16 16"><path d="M5.2,1.2 h5.2 l1,1.2 v3 l-1.6,5.2 h-3.6 l-1.8,-5.2 v-3 z" fill="#e8e000" stroke="#1a1a00" stroke-width="1"/><rect x="6.4" y="2.4" width="1.6" height="5" fill="#ffff80"/><rect x="5.4" y="12.6" width="4.8" height="2.8" rx="0.8" fill="#c8c000" stroke="#1a1a00" stroke-width="1"/></svg><div class="t" style="left:72.3px;top:120.68px;font-size:14.5px;line-height:18px;color:#000;transform:scaleX(0.919);transform-origin:0 0;">Benchmark</div><div class="tab" style="left:165px;top:119px;width:93px;height:21px;"></div><svg style="left:188.9px;top:121px" width="16" height="16" viewBox="0 0 16 16"><rect x="5.6" y="0.8" width="5.4" height="3.6" rx="1.2" fill="#20c0ff" stroke="#001830" stroke-width="1"/><path d="M4.4,6.6 h6.4 v6.6 h1.6 v2.2 h-8.6 v-2.2 h2 v-4.4 h-1.4 z" fill="#1060ff" stroke="#000820" stroke-width="1"/></svg><div class="t" style="left:212.4px;top:120.68px;font-size:14.5px;line-height:18px;color:#000;transform:scaleX(0.919);transform-origin:0 0;letter-spacing:-0.5px;">Info</div><div class="tab" style="left:258px;top:119px;width:110px;height:21px;"></div><svg style="left:282.0px;top:121px" width="16" height="16" viewBox="0 0 16 16"><path d="M5.6,0.8 h5 v4.8 h4.8 v5 h-4.8 v4.8 h-5 v-4.8 h-4.8 v-5 h4.8 z" fill="#e02020" stroke="#600000" stroke-width="1"/><path d="M6.4,1.8 h1.4 v4.8 h-6 v-0.9 h4.6 z" fill="#ff7070" opacity=".8"/></svg><div class="t" style="left:305.5px;top:120.68px;font-size:14.5px;line-height:18px;color:#000;transform:scaleX(0.919);transform-origin:0 0;">Health</div><div class="tab" style="left:368px;top:119px;width:134px;height:21px;"></div><svg style="left:391.2px;top:121px" width="17" height="16" viewBox="0 0 17 16"><path d="M8,8 L14.6,14.4" stroke="#000040" stroke-width="4" stroke-linecap="round"/><path d="M8.4,8.4 L14.4,14.2" stroke="#1818d0" stroke-width="2.2" stroke-linecap="round"/><circle cx="5.6" cy="5.4" r="4.6" fill="#30e040" stroke="#003000" stroke-width="1.1"/><path d="M3.2,4.4 L5,2.6 M5.6,7.6 L8,5.2" stroke="#c8ffd0" stroke-width="1"/></svg><div class="t" style="left:414.7px;top:120.68px;font-size:14.5px;line-height:18px;color:#000;transform:scaleX(0.919);transform-origin:0 0;">Error Scan</div><div class="tab" style="left:502px;top:119px;width:154px;height:21px;"></div><svg style="left:526.2px;top:121px" width="16" height="16" viewBox="0 0 16 16"><path d="M1,3 l1.6,-2 h4.6 l1.4,1.8 h5.2 l1.2,1.2 v10.5 h-14 z" fill="#f0d840" stroke="#1a1400" stroke-width="1.1"/><rect x="2.6" y="5.6" width="9.6" height="9" fill="#d8b020"/><rect x="2.6" y="5.6" width="9.6" height="3.4" fill="#f0d040"/><rect x="12.4" y="5.2" width="1.4" height="9.4" fill="#909090"/><path d="M2.2,5.2 h12 v9.6 h-12 z" fill="none" stroke="#1a1400" stroke-width="0.9"/></svg><div class="t" style="left:549.8px;top:120.68px;font-size:14.5px;line-height:18px;color:#000;transform:scaleX(0.919);transform-origin:0 0;">Folder Usage</div><div class="tab" style="left:656px;top:119px;width:105px;height:21px;"></div><svg style="left:679.8px;top:121px" width="14" height="16" viewBox="0 0 14 16"><defs><linearGradient id="tg" x1="0" x2="1" y1="0" y2="0"><stop offset="0" stop-color="#1a1a1a"/><stop offset=".16" stop-color="#fff"/><stop offset=".3" stop-color="#777"/><stop offset=".44" stop-color="#f0f0f0"/><stop offset=".6" stop-color="#3a3a3a"/><stop offset=".8" stop-color="#0c0c0c"/><stop offset="1" stop-color="#555"/></linearGradient></defs><path d="M2.4,4.4 h9.8 l-0.8,10.8 h-8.2 z" fill="url(#tg)" stroke="#000" stroke-width="1"/><rect x="1" y="1.8" width="12.6" height="2.6" rx="0.8" fill="#333" stroke="#000" stroke-width="0.9"/><rect x="5.2" y="0.4" width="4.2" height="1.6" fill="#222"/></svg><div class="t" style="left:703.3px;top:120.68px;font-size:14.5px;line-height:18px;color:#000;transform:scaleX(0.919);transform-origin:0 0;">Erase</div><div class="tab sel" style="left:23px;top:137px;width:174px;height:23px;"></div><svg style="left:50.7px;top:139px" width="16" height="16" viewBox="0 0 16 16"><path d="M1.5,0.7 h9.5 l3.8,3.8 v11 h-13.3 z" fill="#e6e6e6" stroke="#000" stroke-width="1.3"/><path d="M11,0.7 v3.8 h3.8" fill="#fff" stroke="#000" stroke-width="0.9"/><path d="M6,3 h3.4 l0.8,1 v2.4 l-1.2,4 h-2.6 l-1.2,-4 v-2.4 z" fill="#f010e8" stroke="#30003a" stroke-width="0.9"/><rect x="6" y="12" width="3.4" height="2.2" rx="0.7" fill="#e010d8" stroke="#30003a" stroke-width="0.8"/></svg><div class="t" style="left:74.2px;top:139.08px;font-size:14.5px;line-height:18px;color:#000;transform:scaleX(0.919);transform-origin:0 0;">File Benchmark</div><div class="tab" style="left:195px;top:139px;width:150px;height:20px;"></div><svg style="left:221.0px;top:141.3px" width="16" height="16" viewBox="0 0 16 16"><rect x="0.7" y="0.7" width="14.6" height="14.6" fill="#ffffc0" stroke="#000" stroke-width="1.4"/><path d="M1.4,14.6 v-8 h2.4 v3 h1.2 v1.6 h2 v-4.6 h3.4 v1.8 h2 v1.2 h2.2 v5 z" fill="#00f000"/><rect x="3.6" y="10" width="1.8" height="4.6" fill="#4040ff"/><rect x="7" y="6.4" width="1.6" height="8.2" fill="#4040ff"/><rect x="11" y="8.8" width="1.8" height="5.8" fill="#4040ff"/></svg><div class="t" style="left:244.5px;top:140.68px;font-size:14.5px;line-height:18px;color:#000;transform:scaleX(0.919);transform-origin:0 0;">Disk monitor</div><div class="tab" style="left:345px;top:139px;width:105px;height:20px;"></div><svg style="left:370.4px;top:141.3px" width="17" height="16" viewBox="0 0 17 16"><path d="M1.2,6 l1.4,-1.4 h1.6 l5.4,-4 v14.8 l-5.4,-4.4 h-1.6 l-1.4,-1.2 z" fill="#f0e020" stroke="#1a1400" stroke-width="1.1"/><path d="M7.6,2.6 v10.4" stroke="#a89000" stroke-width="1.4"/><circle cx="8.8" cy="7.8" r="1" fill="#fff" stroke="#222" stroke-width=".6"/><path d="M11.4,5 q1.6,2.8 0,5.8 M13.4,3.4 q2.6,4.4 0,8.8" fill="none" stroke="#222" stroke-width="1"/></svg><div class="t" style="left:393.9px;top:140.68px;font-size:14.5px;line-height:18px;color:#000;transform:scaleX(0.919);transform-origin:0 0;">AAM</div><div class="tab" style="left:450px;top:139px;width:176px;height:20px;"></div><svg style="left:476.1px;top:141.3px" width="16" height="16" viewBox="0 0 16 16"><rect x="0.7" y="0.7" width="14.6" height="14.6" fill="#ffffc8" stroke="#000" stroke-width="1.4"/><rect x="3" y="7" width="1.3" height="1.3" fill="#1020ff"/><rect x="4" y="9" width="1.3" height="1.3" fill="#1020ff"/><rect x="6" y="10" width="1.3" height="1.3" fill="#1020ff"/><rect x="8" y="7" width="1.3" height="1.3" fill="#1020ff"/><rect x="10" y="5" width="1.3" height="1.3" fill="#1020ff"/><rect x="12" y="4" width="1.3" height="1.3" fill="#1020ff"/><rect x="12" y="6" width="1.3" height="1.3" fill="#1020ff"/><rect x="2" y="14" width="1.3" height="1.3" fill="#ff1010"/><rect x="3" y="12" width="1.3" height="1.3" fill="#ff1010"/><rect x="4" y="10" width="1.3" height="1.3" fill="#ff1010"/><rect x="7" y="12" width="1.3" height="1.3" fill="#ff1010"/><rect x="8" y="9" width="1.3" height="1.3" fill="#ff1010"/><rect x="10" y="11" width="1.3" height="1.3" fill="#ff1010"/><rect x="12" y="9" width="1.3" height="1.3" fill="#ff1010"/><rect x="13" y="11" width="1.3" height="1.3" fill="#ff1010"/></svg><div class="t" style="left:499.6px;top:140.68px;font-size:14.5px;line-height:18px;color:#000;transform:scaleX(0.919);transform-origin:0 0;">Random Access</div><div class="tab" style="left:626px;top:139px;width:135px;height:20px;"></div><svg style="left:651.5px;top:141.3px" width="16" height="16" viewBox="0 0 16 16"><rect x="0.7" y="0.7" width="14.6" height="14.6" fill="#ffffc8" stroke="#000" stroke-width="1.4"/><path d="M1.4,14.6 v-8 h2.2 v3 h1.4 v1 h1 v4 z" fill="#00f000"/><rect x="3.4" y="10" width="2" height="4.6" fill="#4040ff"/><rect x="6" y="6.4" width="9.2" height="8.8" fill="#fff" stroke="#000" stroke-width="1"/><rect x="6.5" y="6.9" width="8.2" height="1.4" fill="#1020ff"/><rect x="7.6" y="9.4" width="1.1" height="1.1" fill="#ff1010"/><rect x="9.8" y="9.4" width="1.1" height="1.1" fill="#1020ff"/><rect x="12.0" y="9.4" width="1.1" height="1.1" fill="#ff1010"/><rect x="7.6" y="11.3" width="1.1" height="1.1" fill="#00c000"/><rect x="9.8" y="11.3" width="1.1" height="1.1" fill="#ff1010"/><rect x="12.0" y="11.3" width="1.1" height="1.1" fill="#ff1010"/><rect x="7.6" y="13.2" width="1.1" height="1.1" fill="#ff1010"/><rect x="9.8" y="13.2" width="1.1" height="1.1" fill="#ff1010"/><rect x="12.0" y="13.2" width="1.1" height="1.1" fill="#1020ff"/></svg><div class="t" style="left:675.0px;top:140.68px;font-size:14.5px;line-height:18px;color:#000;transform:scaleX(0.919);transform-origin:0 0;letter-spacing:-0.29px;">Extra tests</div><div style="left:67px;top:177px;width:16px;height:16px;border:1px solid #8e8f8f;background:#f4f4f4;"></div><div style="left:69px;top:179px;width:12px;height:12px;border:1px solid;border-color:#b2b6bd #e2e3e6 #e2e3e6 #b2b6bd;background:linear-gradient(135deg,#cbcfd5 0%,#dfe1e4 45%,#f2f2f2 100%);"></div><svg style="left:69px;top:178px" width="13" height="13" viewBox="0 0 13 13"><path d="M2.2,6.6 L3.6,5.8 L5.2,8.6 Q7.4,4 11.4,1.2 L11.8,1.8 Q8.4,5.6 5.8,11.6 L4.6,11.6 Z" fill="#40508e" stroke="#31437e" stroke-width=".5"/></svg><div class="t" style="left:87.29999999999995px;top:176.18px;font-size:14.5px;line-height:18px;color:#000;transform:scaleX(0.919);transform-origin:0 0;">Transfer speed</div><svg style="left:56px;top:211px" width="536" height="138" viewBox="56 211 536 138" shape-rendering="crispEdges"><defs><linearGradient id="g2bg" gradientUnits="userSpaceOnUse" x1="0" y1="213" x2="0" y2="341"><stop offset="0" stop-color="#000"/><stop offset="1" stop-color="#404040"/></linearGradient><linearGradient id="g2M" gradientUnits="userSpaceOnUse" x1="0" y1="213" x2="0" y2="341"><stop offset="0" stop-color="#5c5c5c"/><stop offset="1" stop-color="#767676"/></linearGradient><linearGradient id="g2m" gradientUnits="userSpaceOnUse" x1="0" y1="213" x2="0" y2="341"><stop offset="0" stop-color="#545454"/><stop offset=".45" stop-color="#484848"/><stop offset="1" stop-color="#474747"/></linearGradient><linearGradient id="g2d" gradientUnits="userSpaceOnUse" x1="0" y1="213" x2="0" y2="341"><stop offset="0" stop-color="#2c2c2c"/><stop offset="1" stop-color="#4c4c4c"/></linearGradient></defs><rect x="60" y="211" width="528" height="132" fill="#000"/><rect x="62" y="213" width="525" height="128" fill="url(#g2bg)"/><rect x="62" y="340" width="525" height="1" fill="#4c4c4c"/><rect x="88" y="213" width="1" height="128" fill="url(#g2m)"/><rect x="88" y="341" width="1" height="3" fill="#5e5e5e"/><rect x="140" y="213" width="1" height="128" fill="url(#g2m)"/><rect x="140" y="341" width="1" height="3" fill="#5e5e5e"/><rect x="193" y="213" width="1" height="128" fill="url(#g2m)"/><rect x="193" y="341" width="1" height="3" fill="#5e5e5e"/><rect x="245" y="213" width="1" height="128" fill="url(#g2m)"/><rect x="245" y="341" width="1" height="3" fill="#5e5e5e"/><rect x="297" y="213" width="1" height="128" fill="url(#g2m)"/><rect x="297" y="341" width="1" height="3" fill="#5e5e5e"/><rect x="350" y="213" width="1" height="128" fill="url(#g2m)"/><rect x="350" y="341" width="1" height="3" fill="#5e5e5e"/><rect x="402" y="213" width="1" height="128" fill="url(#g2m)"/><rect x="402" y="341" width="1" height="3" fill="#5e5e5e"/><rect x="455" y="213" width="1" height="128" fill="url(#g2m)"/><rect x="455" y="341" width="1" height="3" fill="#5e5e5e"/><rect x="507" y="213" width="1" height="128" fill="url(#g2m)"/><rect x="507" y="341" width="1" height="3" fill="#5e5e5e"/><rect x="559" y="213" width="1" height="128" fill="url(#g2m)"/><rect x="559" y="341" width="1" height="3" fill="#5e5e5e"/><rect x="62" y="223" width="526" height="1" fill="#525252"/><rect x="62" y="245" width="526" height="1" fill="#4d4d4d"/><rect x="62" y="266" width="526" height="1" fill="#494949"/><rect x="62" y="287" width="526" height="1" fill="#484848"/><rect x="62" y="309" width="526" height="1" fill="#474747"/><rect x="62" y="330" width="526" height="1" fill="#474747"/><rect x="62" y="213" width="1" height="128" fill="url(#g2M)"/><rect x="62" y="341" width="1" height="5" fill="#727272"/><rect x="114" y="213" width="1" height="128" fill="url(#g2M)"/><rect x="114" y="341" width="1" height="5" fill="#727272"/><rect x="166" y="213" width="1" height="128" fill="url(#g2M)"/><rect x="166" y="341" width="1" height="5" fill="#727272"/><rect x="219" y="213" width="1" height="128" fill="url(#g2M)"/><rect x="219" y="341" width="1" height="5" fill="#727272"/><rect x="271" y="213" width="1" height="128" fill="url(#g2M)"/><rect x="271" y="341" width="1" height="5" fill="#727272"/><rect x="324" y="213" width="1" height="128" fill="url(#g2M)"/><rect x="324" y="341" width="1" height="5" fill="#727272"/><rect x="376" y="213" width="1" height="128" fill="url(#g2M)"/><rect x="376" y="341" width="1" height="5" fill="#727272"/><rect x="428" y="213" width="1" height="128" fill="url(#g2M)"/><rect x="428" y="341" width="1" height="5" fill="#727272"/><rect x="481" y="213" width="1" height="128" fill="url(#g2M)"/><rect x="481" y="341" width="1" height="5" fill="#727272"/><rect x="533" y="213" width="1" height="128" fill="url(#g2M)"/><rect x="533" y="341" width="1" height="5" fill="#727272"/><rect x="586" y="213" width="1" height="128" fill="url(#g2M)"/><rect x="586" y="341" width="1" height="5" fill="#727272"/><rect x="59" y="213" width="530" height="1" fill="#5c5c5c"/><rect x="59" y="234" width="530" height="1" fill="#606060"/><rect x="59" y="255" width="530" height="1" fill="#656565"/><rect x="59" y="277" width="530" height="1" fill="#696969"/><rect x="59" y="298" width="530" height="1" fill="#6d6d6d"/><rect x="59" y="319" width="530" height="1" fill="#727272"/><polyline points="62.6,291.9 63.5,274.9 64.6,264.4 65.9,257.2 67.4,251.2 69.2,257.2 70.5,263.1 72.4,269.6 75.1,274.9 77.4,264.4 80.3,275.5 83.2,263.3 85.6,267.7 88.8,269.6 92.8,272.2 96.7,267.3 100.0,269.0 103.3,270.3 105.9,272.2 109.8,267.3 113.1,268.3 115.1,269.6 117.3,262.4 118.1,277.5 119.4,300.5 120.7,288.0 121.6,277.5 122.6,263.7 125.2,270.9 126.5,263.1 127.6,256.5 129.5,261.1 131.5,263.1 135.4,263.7 138.1,268.3 140.4,259.4 144.0,263.1 148.6,262.4 151.2,258.5 153.1,263.1 155.8,266.7 158.4,263.1 164.3,263.1 167.2,267.3 169.5,260.4 172.2,262.8 176.1,261.1 178.7,263.7 180.7,266.7 184.0,262.8 191.2,263.1 193.2,265.7 194.7,273.6 196.1,282.7 196.8,285.6 193.0,266.3 195.6,281.4 196.9,285.4 204.5,285.4 206.1,274.9 207.4,264.4 209.4,260.4 211.4,261.7 216.0,263.1 219.2,257.5 220.3,272.2 222.5,289.3 224.5,277.5 225.8,264.4 227.4,258.5 228.7,267.0 230.4,275.5 232.4,264.4 233.9,262.4 237.0,263.1 238.9,265.0 242.2,261.5 250.7,262.0 254.0,267.7 256.6,259.8 258.0,262.4 259.9,267.0 262.6,282.1 264.5,284.1 267.8,284.7 270.7,286.4 273.1,284.7 280.7,284.3 282.2,277.5 284.2,264.4 285.5,257.5 290.1,261.1 292.7,262.0 296.7,263.1 298.6,269.0 300.0,263.1 301.7,256.5 304.5,261.5 308.5,261.7 311.1,260.4 315.0,265.0 317.0,262.0 319.6,261.5 324.2,261.5 328.8,263.1 330.5,266.3 332.1,263.1 328.0,263.1 330.4,266.3 332.6,263.1 335.9,260.4 337.8,261.7 344.4,262.4 346.6,265.4 349.0,262.0 351.0,261.7 352.9,265.7 354.9,269.6 358.8,267.7 360.8,265.7 364.7,265.4 373.3,266.3 375.5,269.4 378.5,265.9 381.1,268.3 383.1,264.4 384.4,248.6 385.5,241.4 386.4,257.8 387.3,285.4 388.6,294.6 389.9,274.9 391.3,258.5 393.6,261.7 396.2,263.7 399.5,261.7 402.1,262.4 404.8,265.0 408.1,262.0 414.6,262.4 417.5,269.4 419.2,260.4 420.5,255.8 422.5,261.1 425.1,261.5 431.0,262.4 433.0,265.4 435.0,262.0 440.9,261.7 446.8,262.4 449.0,265.4 451.4,261.7 456.0,261.1 461.9,262.4 464.5,266.3 466.8,262.4 463.0,263.1 464.6,265.9 466.9,262.4 469.6,260.7 471.5,261.1 478.7,262.4 481.4,265.4 483.3,261.1 486.6,262.4 493.8,263.1 496.5,267.3 498.2,263.1 499.7,258.9 501.3,263.1 503.7,261.7 510.2,262.4 512.6,265.0 514.8,261.5 520.1,261.1 521.4,265.0 522.7,270.7 524.7,269.0 527.3,265.9 531.2,265.7 533.9,269.4 536.5,265.4 539.1,266.7 541.7,269.4 544.4,265.9 547.0,267.3 549.0,271.2 550.7,266.7 552.2,263.7 554.2,266.3 557.5,265.9 565.4,265.9 567.3,269.4 570.0,266.7 572.6,267.3 575.2,271.2 576.9,267.3 578.5,263.7 580.5,267.0 583.1,270.3 584.4,266.7 586.4,267.3" fill="none" stroke="#f48a08" stroke-width="1" shape-rendering="crispEdges" stroke-linejoin="bevel"/><polyline points="62.6,309.0 63.0,299.8 63.9,281.4 65.2,265.7 67.2,259.4 68.2,270.9 68.8,282.7 69.8,290.6 71.1,280.1 72.2,268.3 74.4,271.6 77.0,267.7 79.7,272.0 83.6,268.0 86.2,268.6 88.8,271.6 90.8,268.3 93.4,272.0 96.7,268.0 100.0,269.6 102.0,271.6 104.6,268.3 106.6,272.0 109.8,268.0 113.1,268.6 114.7,270.9 116.4,282.7 117.7,289.3 118.6,280.1 119.4,263.1 121.0,262.8 127.6,262.8 130.2,266.3 132.5,263.1 140.7,262.8 143.3,266.3 145.9,262.8 153.8,262.8 155.8,266.3 158.4,262.8 166.3,262.8 168.9,266.7 171.9,262.8 179.4,262.8 182.7,266.3 184.6,262.8 193.2,262.8 195.8,266.3 193.0,263.1 195.9,265.9 198.2,262.8 206.8,262.8 209.4,266.3 212.7,263.1 215.3,263.1 217.9,274.9 219.9,282.7 221.2,268.3 222.1,261.7 224.5,261.7 226.1,270.9 227.4,278.1 229.1,268.3 230.4,262.0 236.3,261.7 238.9,262.4 241.3,265.0 243.1,261.7 254.7,261.7 256.6,265.0 258.6,261.7 270.4,261.7 272.4,265.7 275.0,261.7 284.9,261.5 288.5,265.0 290.8,261.7 301.9,261.7 304.5,265.0 306.1,261.7 311.1,261.1 313.7,262.4 318.3,262.4 320.3,265.0 322.3,262.0 332.1,261.7 328.0,261.7 333.2,261.7 335.2,265.4 337.4,261.7 349.0,261.7 350.3,265.7 351.6,272.0 353.6,266.3 356.2,265.7 359.5,269.0 362.1,265.4 364.7,265.7 367.4,269.4 370.0,265.7 374.6,265.7 377.2,269.0 379.8,265.7 382.5,265.7 384.2,272.2 385.5,285.4 386.8,273.6 388.1,262.4 391.0,261.7 393.6,265.9 396.2,263.3 398.9,261.5 404.1,261.5 406.5,265.0 408.7,261.7 419.9,261.5 422.8,265.0 425.1,261.5 436.9,261.5 438.9,265.0 440.9,261.5 452.0,261.5 454.0,265.0 456.0,261.5 467.1,261.5 463.0,261.5 467.6,261.5 469.8,265.0 471.9,261.5 484.0,261.5 485.6,265.0 487.7,261.5 498.4,261.5 501.1,265.0 503.4,261.5 514.8,261.5 518.1,266.7 520.7,269.6 522.7,265.7 524.9,269.6 528.0,265.7 531.9,265.4 534.9,269.4 537.1,265.9 540.4,265.9 543.7,269.6 546.3,265.9 549.6,265.9 551.6,269.4 553.8,265.7 556.8,265.7 559.5,269.6 562.1,265.7 568.0,265.4 570.6,269.0 572.6,265.9 575.2,265.9 577.8,269.4 580.5,265.9 583.1,266.3 585.0,268.3 586.4,266.3" fill="none" stroke="#18b4f4" stroke-width="1" shape-rendering="crispEdges" stroke-linejoin="bevel"/></svg><div class="t" style="left:64.5px;top:211.98px;font-size:14.5px;line-height:18px;color:#8c96a0;transform:scaleX(0.919);transform-origin:0 0;">trial version</div><div class="t" style="left:61.8px;top:196.18px;font-size:14.5px;line-height:18px;color:#000;transform:scaleX(0.919);transform-origin:0 0;">MB/s</div><div class="t" style="left:569px;top:196.18px;font-size:14.5px;line-height:18px;color:#000;transform:scaleX(0.919);transform-origin:0 0;">ms</div><div class="t" style="left:16.799999999999955px;top:204.08px;font-size:14.5px;line-height:18px;color:#000;width:40.5px;text-align:right;transform:scaleX(0.875);transform-origin:100% 0;">150</div><div class="t" style="left:16.799999999999955px;top:225.08px;font-size:14.5px;line-height:18px;color:#000;width:40.5px;text-align:right;transform:scaleX(0.875);transform-origin:100% 0;">125</div><div class="t" style="left:16.799999999999955px;top:246.08px;font-size:14.5px;line-height:18px;color:#000;width:40.5px;text-align:right;transform:scaleX(0.875);transform-origin:100% 0;">100</div><div class="t" style="left:16.799999999999955px;top:268.08px;font-size:14.5px;line-height:18px;color:#000;width:40.5px;text-align:right;transform:scaleX(0.875);transform-origin:100% 0;">75</div><div class="t" style="left:16.799999999999955px;top:289.08px;font-size:14.5px;line-height:18px;color:#000;width:40.5px;text-align:right;transform:scaleX(0.875);transform-origin:100% 0;">50</div><div class="t" style="left:16.799999999999955px;top:310.08px;font-size:14.5px;line-height:18px;color:#000;width:40.5px;text-align:right;transform:scaleX(0.875);transform-origin:100% 0;">25</div><div class="t" style="left:591.5px;top:204.08px;font-size:14.5px;line-height:18px;color:#000;transform:scaleX(0.875);transform-origin:0 0;">60</div><div class="t" style="left:591.5px;top:225.08px;font-size:14.5px;line-height:18px;color:#000;transform:scaleX(0.875);transform-origin:0 0;">50</div><div class="t" style="left:591.5px;top:246.08px;font-size:14.5px;line-height:18px;color:#000;transform:scaleX(0.875);transform-origin:0 0;">40</div><div class="t" style="left:591.5px;top:268.08px;font-size:14.5px;line-height:18px;color:#000;transform:scaleX(0.875);transform-origin:0 0;">30</div><div class="t" style="left:591.5px;top:289.08px;font-size:14.5px;line-height:18px;color:#000;transform:scaleX(0.875);transform-origin:0 0;">20</div><div class="t" style="left:591.5px;top:310.08px;font-size:14.5px;line-height:18px;color:#000;transform:scaleX(0.875);transform-origin:0 0;">10</div><div class="t" style="left:31.8px;top:344.18px;font-size:14.5px;line-height:18px;color:#000;width:60px;text-align:center;transform:scaleX(0.875);transform-origin:50% 0;">0</div><div class="t" style="left:84.15000000000002px;top:344.18px;font-size:14.5px;line-height:18px;color:#000;width:60px;text-align:center;transform:scaleX(0.875);transform-origin:50% 0;">50</div><div class="t" style="left:136.50000000000006px;top:344.18px;font-size:14.5px;line-height:18px;color:#000;width:60px;text-align:center;transform:scaleX(0.875);transform-origin:50% 0;">100</div><div class="t" style="left:188.84999999999997px;top:344.18px;font-size:14.5px;line-height:18px;color:#000;width:60px;text-align:center;transform:scaleX(0.875);transform-origin:50% 0;">150</div><div class="t" style="left:241.2000000000001px;top:344.18px;font-size:14.5px;line-height:18px;color:#000;width:60px;text-align:center;transform:scaleX(0.875);transform-origin:50% 0;">200</div><div class="t" style="left:293.55px;top:344.18px;font-size:14.5px;line-height:18px;color:#000;width:60px;text-align:center;transform:scaleX(0.875);transform-origin:50% 0;">250</div><div class="t" style="left:345.8999999999999px;top:344.18px;font-size:14.5px;line-height:18px;color:#000;width:60px;text-align:center;transform:scaleX(0.875);transform-origin:50% 0;">300</div><div class="t" style="left:398.25000000000006px;top:344.18px;font-size:14.5px;line-height:18px;color:#000;width:60px;text-align:center;transform:scaleX(0.875);transform-origin:50% 0;">350</div><div class="t" style="left:450.59999999999997px;top:344.18px;font-size:14.5px;line-height:18px;color:#000;width:60px;text-align:center;transform:scaleX(0.875);transform-origin:50% 0;">400</div><div class="t" style="left:502.9500000000001px;top:344.18px;font-size:14.5px;line-height:18px;color:#000;width:60px;text-align:center;transform:scaleX(0.875);transform-origin:50% 0;">450</div><div class="t" style="left:555.3px;top:344.18px;font-size:14.5px;line-height:18px;color:#000;width:60px;text-align:center;transform:scaleX(0.875);transform-origin:50% 0;">500mB</div><div style="left:61px;top:379px;width:484px;height:2px;background:#646464;"></div><div style="left:305px;top:361px;width:2px;height:92px;background:#646464;"></div><div style="left:417px;top:361px;width:2px;height:92px;background:#646464;"></div><div class="t" style="left:305.5px;top:360.18px;font-size:14.5px;line-height:18px;color:#000;width:110px;text-align:center;transform:scaleX(0.919);transform-origin:50% 0;">Read</div><div class="t" style="left:419px;top:360.18px;font-size:14.5px;line-height:18px;color:#000;width:115px;text-align:center;transform:scaleX(0.919);transform-origin:50% 0;">Write</div><div class="t" style="left:66.5px;top:384.18px;font-size:14.5px;line-height:18px;color:#000;transform:scaleX(0.919);transform-origin:0 0;">Sequential</div><div class="t" style="left:65.20000000000005px;top:408.18px;font-size:14.5px;line-height:18px;color:#000;transform:scaleX(0.919);transform-origin:0 0;">4 KB random single</div><div class="t" style="left:65.20000000000005px;top:432.18px;font-size:14.5px;line-height:18px;color:#000;transform:scaleX(0.919);transform-origin:0 0;">4 KB random multi</div><div class="t" style="left:295px;top:384.18px;font-size:14.5px;line-height:18px;color:#000;font-weight:bold;width:120px;text-align:right;transform:scaleX(0.975);transform-origin:100% 0;letter-spacing:.36px;">89827 KB/s</div><div class="t" style="left:295px;top:408.18px;font-size:14.5px;line-height:18px;color:#000;font-weight:bold;width:120px;text-align:right;transform:scaleX(0.975);transform-origin:100% 0;letter-spacing:.36px;">75 IOPS</div><div class="t" style="left:295px;top:432.18px;font-size:14.5px;line-height:18px;color:#000;font-weight:bold;width:120px;text-align:right;transform:scaleX(0.975);transform-origin:100% 0;letter-spacing:.36px;">224 IOPS</div><div class="t" style="left:410.79999999999995px;top:384.18px;font-size:14.5px;line-height:18px;color:#000;font-weight:bold;width:120px;text-align:right;transform:scaleX(0.975);transform-origin:100% 0;letter-spacing:.36px;">88130 KB/s</div><div class="t" style="left:410.79999999999995px;top:408.18px;font-size:14.5px;line-height:18px;color:#000;font-weight:bold;width:120px;text-align:right;transform:scaleX(0.975);transform-origin:100% 0;letter-spacing:.36px;">304 IOPS</div><div class="t" style="left:410.79999999999995px;top:432.18px;font-size:14.5px;line-height:18px;color:#000;font-weight:bold;width:120px;text-align:right;transform:scaleX(0.975);transform-origin:100% 0;letter-spacing:.36px;">244 IOPS</div><div style="left:213px;top:427px;width:46px;height:24px;border:1px solid #abadb3;border-radius:2px;background:#fff;"></div><div class="t" style="left:216px;top:429.18px;font-size:14.5px;line-height:18px;color:#000;transform:scaleX(0.875);transform-origin:0 0;">32</div><div style="left:238px;top:429px;width:19px;height:9px;border:1px solid #a3a3a3;background:linear-gradient(#f6f6f6,#ebebeb 50%,#dcdcdc 52%,#d2d2d2);box-shadow:inset 0 0 0 1px rgba(255,255,255,.7);"></div><svg style="left:244.0px;top:431.2px" width="7" height="4" viewBox="0 0 7 4"><polygon points="0,4 3.5,0 7,4" fill="#4f63b5"/></svg><div style="left:238px;top:440px;width:19px;height:9px;border:1px solid #a3a3a3;background:linear-gradient(#f6f6f6,#ebebeb 50%,#dcdcdc 52%,#d2d2d2);box-shadow:inset 0 0 0 1px rgba(255,255,255,.7);"></div><svg style="left:244.0px;top:442.8px" width="7" height="4" viewBox="0 0 7 4"><polygon points="0,0 7,0 3.5,4" fill="#4f63b5"/></svg><div style="left:27px;top:461px;width:717px;height:1px;background:#8c8c8c;"></div><div style="left:67px;top:471px;width:16px;height:16px;border:1px solid #8e8f8f;background:#f4f4f4;"></div><div style="left:69px;top:473px;width:12px;height:12px;border:1px solid;border-color:#b2b6bd #e2e3e6 #e2e3e6 #b2b6bd;background:linear-gradient(135deg,#cbcfd5 0%,#dfe1e4 45%,#f2f2f2 100%);"></div><div class="t" style="left:86.1px;top:470.28px;font-size:14.5px;line-height:18px;color:#000;transform:scaleX(0.919);transform-origin:0 0;">Block size measurement</div><svg style="left:41px;top:507px" width="576" height="94" viewBox="41 507 576 94" shape-rendering="crispEdges"><defs><linearGradient id="g3bg" gradientUnits="userSpaceOnUse" x1="0" y1="509" x2="0" y2="593"><stop offset="0" stop-color="#000"/><stop offset="1" stop-color="#404040"/></linearGradient><linearGradient id="g3M" gradientUnits="userSpaceOnUse" x1="0" y1="509" x2="0" y2="593"><stop offset="0" stop-color="#5c5c5c"/><stop offset="1" stop-color="#767676"/></linearGradient><linearGradient id="g3m" gradientUnits="userSpaceOnUse" x1="0" y1="509" x2="0" y2="593"><stop offset="0" stop-color="#545454"/><stop offset=".45" stop-color="#484848"/><stop offset="1" stop-color="#474747"/></linearGradient><linearGradient id="g3d" gradientUnits="userSpaceOnUse" x1="0" y1="509" x2="0" y2="593"><stop offset="0" stop-color="#2c2c2c"/><stop offset="1" stop-color="#4c4c4c"/></linearGradient></defs><rect x="45" y="507" width="568" height="88" fill="#000"/><rect x="47" y="509" width="564" height="84" fill="url(#g3bg)"/><rect x="47" y="509" width="1" height="84" fill="url(#g3d)"/><rect x="610" y="509" width="1" height="84" fill="url(#g3d)"/><rect x="47" y="592" width="564" height="1" fill="#4c4c4c"/><rect x="47" y="517" width="566" height="1" fill="#515151"/><rect x="47" y="534" width="566" height="1" fill="#4c4c4c"/><rect x="47" y="551" width="566" height="1" fill="#484848"/><rect x="47" y="567" width="566" height="1" fill="#484848"/><rect x="47" y="584" width="566" height="1" fill="#474747"/><rect x="65" y="509" width="1" height="84" fill="url(#g3M)"/><rect x="65" y="593" width="1" height="5" fill="#727272"/><rect x="103" y="509" width="1" height="84" fill="url(#g3M)"/><rect x="103" y="593" width="1" height="5" fill="#727272"/><rect x="140" y="509" width="1" height="84" fill="url(#g3M)"/><rect x="140" y="593" width="1" height="5" fill="#727272"/><rect x="178" y="509" width="1" height="84" fill="url(#g3M)"/><rect x="178" y="593" width="1" height="5" fill="#727272"/><rect x="215" y="509" width="1" height="84" fill="url(#g3M)"/><rect x="215" y="593" width="1" height="5" fill="#727272"/><rect x="253" y="509" width="1" height="84" fill="url(#g3M)"/><rect x="253" y="593" width="1" height="5" fill="#727272"/><rect x="290" y="509" width="1" height="84" fill="url(#g3M)"/><rect x="290" y="593" width="1" height="5" fill="#727272"/><rect x="328" y="509" width="1" height="84" fill="url(#g3M)"/><rect x="328" y="593" width="1" height="5" fill="#727272"/><rect x="366" y="509" width="1" height="84" fill="url(#g3M)"/><rect x="366" y="593" width="1" height="5" fill="#727272"/><rect x="403" y="509" width="1" height="84" fill="url(#g3M)"/><rect x="403" y="593" width="1" height="5" fill="#727272"/><rect x="441" y="509" width="1" height="84" fill="url(#g3M)"/><rect x="441" y="593" width="1" height="5" fill="#727272"/><rect x="478" y="509" width="1" height="84" fill="url(#g3M)"/><rect x="478" y="593" width="1" height="5" fill="#727272"/><rect x="516" y="509" width="1" height="84" fill="url(#g3M)"/><rect x="516" y="593" width="1" height="5" fill="#727272"/><rect x="553" y="509" width="1" height="84" fill="url(#g3M)"/><rect x="553" y="593" width="1" height="5" fill="#727272"/><rect x="591" y="509" width="1" height="84" fill="url(#g3M)"/><rect x="591" y="593" width="1" height="5" fill="#727272"/><rect x="44" y="509" width="570" height="1" fill="#5c5c5c"/><rect x="44" y="525" width="570" height="1" fill="#616161"/><rect x="44" y="542" width="570" height="1" fill="#666666"/><rect x="44" y="559" width="570" height="1" fill="#6c6c6c"/><rect x="44" y="576" width="570" height="1" fill="#717171"/></svg><div class="t" style="left:46.8px;top:490.18px;font-size:14.5px;line-height:18px;color:#000;transform:scaleX(0.919);transform-origin:0 0;">MB/s</div><div class="t" style="left:1px;top:500.08px;font-size:14.5px;line-height:18px;color:#000;width:40.5px;text-align:right;transform:scaleX(0.875);transform-origin:100% 0;">25</div><div class="t" style="left:1px;top:516.08px;font-size:14.5px;line-height:18px;color:#000;width:40.5px;text-align:right;transform:scaleX(0.875);transform-origin:100% 0;">20</div><div class="t" style="left:1px;top:533.08px;font-size:14.5px;line-height:18px;color:#000;width:40.5px;text-align:right;transform:scaleX(0.875);transform-origin:100% 0;">15</div><div class="t" style="left:1px;top:550.08px;font-size:14.5px;line-height:18px;color:#000;width:40.5px;text-align:right;transform:scaleX(0.875);transform-origin:100% 0;">10</div><div class="t" style="left:1px;top:567.08px;font-size:14.5px;line-height:18px;color:#000;width:40.5px;text-align:right;transform:scaleX(0.875);transform-origin:100% 0;">5</div><div class="t" style="left:34.8px;top:597.18px;font-size:14.5px;line-height:18px;color:#000;width:60px;text-align:center;transform:scaleX(0.875);transform-origin:50% 0;">0.5</div><div class="t" style="left:72.35999999999994px;top:597.18px;font-size:14.5px;line-height:18px;color:#000;width:60px;text-align:center;transform:scaleX(0.875);transform-origin:50% 0;">1</div><div class="t" style="left:109.92px;top:597.18px;font-size:14.5px;line-height:18px;color:#000;width:60px;text-align:center;transform:scaleX(0.875);transform-origin:50% 0;">2</div><div class="t" style="left:147.48000000000008px;top:597.18px;font-size:14.5px;line-height:18px;color:#000;width:60px;text-align:center;transform:scaleX(0.875);transform-origin:50% 0;">4</div><div class="t" style="left:185.04000000000002px;top:597.18px;font-size:14.5px;line-height:18px;color:#000;width:60px;text-align:center;transform:scaleX(0.875);transform-origin:50% 0;">8</div><div class="t" style="left:222.59999999999997px;top:597.18px;font-size:14.5px;line-height:18px;color:#000;width:60px;text-align:center;transform:scaleX(0.875);transform-origin:50% 0;">16</div><div class="t" style="left:260.16000000000014px;top:597.18px;font-size:14.5px;line-height:18px;color:#000;width:60px;text-align:center;transform:scaleX(0.875);transform-origin:50% 0;">32</div><div class="t" style="left:297.7200000000001px;top:597.18px;font-size:14.5px;line-height:18px;color:#000;width:60px;text-align:center;transform:scaleX(0.875);transform-origin:50% 0;">64</div><div class="t" style="left:335.28000000000003px;top:597.18px;font-size:14.5px;line-height:18px;color:#000;width:60px;text-align:center;transform:scaleX(0.875);transform-origin:50% 0;">128</div><div class="t" style="left:372.84px;top:597.18px;font-size:14.5px;line-height:18px;color:#000;width:60px;text-align:center;transform:scaleX(0.875);transform-origin:50% 0;">256</div><div class="t" style="left:410.3999999999999px;top:597.18px;font-size:14.5px;line-height:18px;color:#000;width:60px;text-align:center;transform:scaleX(0.875);transform-origin:50% 0;">512</div><div class="t" style="left:447.9600000000001px;top:597.18px;font-size:14.5px;line-height:18px;color:#000;width:60px;text-align:center;transform:scaleX(0.875);transform-origin:50% 0;">1024</div><div class="t" style="left:485.52000000000004px;top:597.18px;font-size:14.5px;line-height:18px;color:#000;width:60px;text-align:center;transform:scaleX(0.875);transform-origin:50% 0;">2048</div><div class="t" style="left:523.0799999999999px;top:597.18px;font-size:14.5px;line-height:18px;color:#000;width:60px;text-align:center;transform:scaleX(0.875);transform-origin:50% 0;">4096</div><div class="t" style="left:560.6400000000001px;top:597.18px;font-size:14.5px;line-height:18px;color:#000;width:60px;text-align:center;transform:scaleX(0.875);transform-origin:50% 0;">8192</div><div style="left:541px;top:494px;width:9px;height:10px;background:linear-gradient(#27a8e0,#0d85c4);"></div><div class="t" style="left:551.4000000000001px;top:489.48px;font-size:14.5px;line-height:18px;color:#000;transform:scaleX(0.919);transform-origin:0 0;">read</div><div style="left:581px;top:494px;width:9px;height:10px;background:linear-gradient(#e08020,#c05c08);"></div><div class="t" style="left:591.2px;top:489.48px;font-size:14.5px;line-height:18px;color:#000;transform:scaleX(0.919);transform-origin:0 0;">write</div><div class="btn" style="left:648px;top:176px;width:98px;height:26px;"></div><div class="t" style="left:648px;top:179.98px;font-size:14.5px;line-height:18px;color:#000;width:98px;text-align:center;transform:scaleX(0.919);transform-origin:50% 0;">Start</div><div class="t" style="left:646.9px;top:210.18px;font-size:14.5px;line-height:18px;color:#000;transform:scaleX(0.919);transform-origin:0 0;">Drive</div><div class="btn" style="left:647px;top:233px;width:100px;height:24px;"></div><div class="t" style="left:650.6px;top:236.18px;font-size:14.5px;line-height:18px;color:#000;transform:scaleX(0.919);transform-origin:0 0;">C:</div><svg style="left:732px;top:243px" width="9" height="5" viewBox="0 0 9 5"><polygon points="0,0 9,0 4.5,5" fill="#000"/></svg><div class="t" style="left:646.9px;top:266.28px;font-size:14.5px;line-height:18px;color:#000;transform:scaleX(0.919);transform-origin:0 0;">File length</div><div style="left:647px;top:297px;width:74px;height:24px;border:1px solid #abadb3;border-radius:2px;background:#fff;"></div><div class="t" style="left:650px;top:299.18px;font-size:14.5px;line-height:18px;color:#000;transform:scaleX(0.875);transform-origin:0 0;">500</div><div style="left:700px;top:299px;width:19px;height:9px;border:1px solid #a3a3a3;background:linear-gradient(#f6f6f6,#ebebeb 50%,#dcdcdc 52%,#d2d2d2);box-shadow:inset 0 0 0 1px rgba(255,255,255,.7);"></div><svg style="left:706.0px;top:301.2px" width="7" height="4" viewBox="0 0 7 4"><polygon points="0,4 3.5,0 7,4" fill="#4f63b5"/></svg><div style="left:700px;top:310px;width:19px;height:9px;border:1px solid #a3a3a3;background:linear-gradient(#f6f6f6,#ebebeb 50%,#dcdcdc 52%,#d2d2d2);box-shadow:inset 0 0 0 1px rgba(255,255,255,.7);"></div><svg style="left:706.0px;top:312.8px" width="7" height="4" viewBox="0 0 7 4"><polygon points="0,0 7,0 3.5,4" fill="#4f63b5"/></svg><div class="t" style="left:722.6px;top:304.18px;font-size:14.5px;line-height:18px;color:#000;transform:scaleX(0.919);transform-origin:0 0;">MB</div><div class="t" style="left:646.9px;top:342.18px;font-size:14.5px;line-height:18px;color:#000;transform:scaleX(0.919);transform-origin:0 0;">Data pattern</div><div class="btn" style="left:647px;top:367px;width:100px;height:24px;"></div><div class="t" style="left:650.6px;top:370.18px;font-size:14.5px;line-height:18px;color:#000;transform:scaleX(0.919);transform-origin:0 0;">Zero</div><svg style="left:732px;top:377px" width="9" height="5" viewBox="0 0 9 5"><polygon points="0,0 9,0 4.5,5" fill="#000"/></svg><div class="t" style="left:648.6px;top:478.18px;font-size:14.5px;line-height:18px;color:#000;transform:scaleX(0.919);transform-origin:0 0;">File length</div><div class="btn" style="left:647px;top:505px;width:100px;height:24px;"></div><div class="t" style="left:651.3px;top:508.18px;font-size:14.5px;line-height:18px;color:#000;transform:scaleX(0.919);transform-origin:0 0;">64 MB</div><svg style="left:732px;top:515px" width="9" height="5" viewBox="0 0 9 5"><polygon points="0,0 9,0 4.5,5" fill="#000"/></svg><div class="t" style="left:648.6px;top:544.18px;font-size:14.5px;line-height:18px;color:#000;transform:scaleX(0.919);transform-origin:0 0;">Delay</div><div style="left:649px;top:569px;width:72px;height:24px;border:1px solid;border-color:#abadb3 #dbdfe6 #e3e9ef #dbdfe6;border-radius:2px;background:#fff;"></div><div class="t" style="left:652px;top:571.18px;font-size:14.5px;line-height:18px;color:#000;transform:scaleX(0.875);transform-origin:0 0;">0</div><div style="left:726px;top:568px;width:19px;height:26px;background:#b0b0b4;"></div><div style="left:726px;top:568px;width:19px;height:12px;border:1px solid #a3a3a3;background:linear-gradient(#f6f6f6,#ebebeb 50%,#dcdcdc 52%,#d2d2d2);box-shadow:inset 0 0 0 1px rgba(255,255,255,.7);"></div><svg style="left:732.0px;top:571.7px" width="7" height="4" viewBox="0 0 7 4"><polygon points="0,4 3.5,0 7,4" fill="#4f63b5"/></svg><div style="left:726px;top:582px;width:19px;height:12px;border:1px solid #a3a3a3;background:linear-gradient(#f6f6f6,#ebebeb 50%,#dcdcdc 52%,#d2d2d2);box-shadow:inset 0 0 0 1px rgba(255,255,255,.7);"></div><svg style="left:732.0px;top:586.3px" width="7" height="4" viewBox="0 0 7 4"><polygon points="0,0 7,0 3.5,4" fill="#4f63b5"/></svg></div></body></html>
